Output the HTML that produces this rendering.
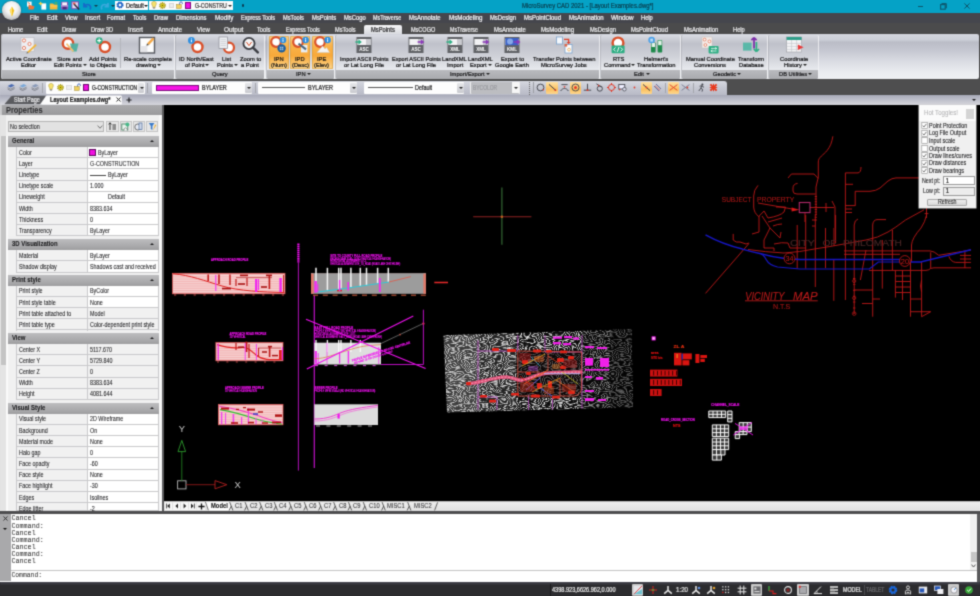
<!DOCTYPE html>
<html lang="en"><head><meta charset="utf-8"><title>MicroSurvey CAD 2021 - [Layout Examples.dwg*]</title>
<style>
html,body{margin:0;padding:0;background:#000;}
body{width:980px;height:596px;position:relative;overflow:hidden;font-family:"Liberation Sans",sans-serif;}
.b{position:absolute;display:block;}
.t{position:absolute;display:block;white-space:nowrap;transform-origin:0 50%;font-family:"Liberation Sans",sans-serif;-webkit-text-stroke:0.22px currentColor;}
.ns .t{-webkit-text-stroke:0.08px currentColor;}
.m{font-family:"Liberation Mono",monospace;-webkit-text-stroke:0;}
.tri{width:0;height:0;border-style:solid;border-width:2.5px 2px 0 2px;border-color:transparent;}
#w{position:absolute;left:-3px;top:-3px;width:986px;height:602px;filter:url(#soft);}
#c{position:absolute;left:3px;top:3px;width:980px;height:596px;}
</style></head>
<body>
<svg width="0" height="0" style="position:absolute"><defs><filter id="soft" x="0" y="0" width="100%" height="100%" color-interpolation-filters="sRGB"><feConvolveMatrix order="3" kernelMatrix="1 4 1 4 16 4 1 4 1" divisor="36" edgeMode="duplicate" preserveAlpha="true"/></filter></defs></svg>
<div class="b" style="left:0.00px;top:0.00px;width:980.03px;height:596.03px;background:#4b4b4c;"></div>
<div class="b" style="left:0.00px;top:0.00px;width:980.03px;height:12.63px;background:#05a2c6;"></div>
<div class="b" style="left:0.00px;top:12.60px;width:980.03px;height:10.83px;background:#45464d;"></div>
<div class="b" style="left:0.00px;top:23.40px;width:980.03px;height:10.13px;background:#4b4b4c;"></div>
<div class="b" style="left:0.00px;top:33.50px;width:980.03px;height:45.13px;background:#4b4b4c;"></div>
<div class="b" style="left:0.00px;top:78.60px;width:980.03px;height:16.63px;background:#4e4e4f;"></div>
<div class="b" style="left:0.00px;top:80.60px;width:727.03px;height:14.63px;background:#c8cad4;"></div>
<div class="b" style="left:0.00px;top:95.20px;width:980.03px;height:9.43px;background:#bcbeca;"></div>
<div class="b" style="left:0.00px;top:104.60px;width:162.43px;height:406.43px;background:#e0e0e0;"></div>
<div class="b" style="left:164.20px;top:104.60px;width:815.83px;height:396.73px;background:#000;"></div>
<div class="b" style="left:164.20px;top:501.30px;width:815.83px;height:9.73px;background:#e8e8e8;"></div>
<div class="b" style="left:0.00px;top:511.00px;width:980.03px;height:3.03px;background:#4e4e50;"></div>
<div class="b" style="left:0.00px;top:514.00px;width:980.03px;height:67.83px;background:#fff;"></div>
<div class="b" style="left:0.00px;top:514.00px;width:10.63px;height:67.43px;background:#a9a9ab;"></div>
<div class="b" style="left:977.40px;top:514.00px;width:2.63px;height:67.83px;background:#5a5a5c;"></div>
<div class="b" style="left:0.00px;top:581.80px;width:980.03px;height:14.23px;background:#2c2c2f;"></div>
<div id="w"><div id="c">
<div class="b" style="left:-3.00px;top:-3.00px;width:986.03px;height:602.03px;background:#4b4b4c;"></div>
<div class="b" style="left:-3.00px;top:-3.00px;width:986.03px;height:15.63px;background:#05a2c6;"></div>
<div class="b" style="left:-3.00px;top:12.60px;width:986.03px;height:10.83px;background:#45464d;"></div>
<div class="b" style="left:-3.00px;top:23.40px;width:986.03px;height:10.13px;background:#4b4b4c;"></div>
<div class="b" style="left:-3.00px;top:33.50px;width:986.03px;height:45.13px;background:#4b4b4c;"></div>
<div class="b" style="left:-3.00px;top:78.60px;width:986.03px;height:16.63px;background:#4e4e4f;"></div>
<div class="b" style="left:-3.00px;top:80.60px;width:730.03px;height:14.63px;background:#c8cad4;"></div>
<div class="b" style="left:-3.00px;top:95.20px;width:986.03px;height:9.43px;background:#bcbeca;"></div>
<div class="b" style="left:-3.00px;top:104.60px;width:165.43px;height:406.43px;background:#e0e0e0;"></div>
<div class="b" style="left:164.20px;top:104.60px;width:818.83px;height:396.73px;background:#000;"></div>
<div class="b" style="left:164.20px;top:501.30px;width:818.83px;height:9.73px;background:#e8e8e8;"></div>
<div class="b" style="left:-3.00px;top:511.00px;width:986.03px;height:3.03px;background:#4e4e50;"></div>
<div class="b" style="left:-3.00px;top:514.00px;width:986.03px;height:67.83px;background:#fff;"></div>
<div class="b" style="left:-3.00px;top:514.00px;width:13.63px;height:67.43px;background:#a9a9ab;"></div>
<div class="b" style="left:977.40px;top:514.00px;width:5.63px;height:67.83px;background:#5a5a5c;"></div>
<div class="b" style="left:-3.00px;top:581.80px;width:986.03px;height:17.23px;background:#2c2c2f;"></div>
<div class="b" style="left:0.00px;top:0.00px;width:980.03px;height:12.63px;background:#05a2c6;"></div>
<div class="b" style="left:0.00px;top:12.60px;width:980.03px;height:10.83px;background:#45464d;"></div>
<div class="b" style="left:0.00px;top:23.40px;width:980.03px;height:10.13px;background:#4b4b4c;"></div>
<div class="b" style="left:2.4px;top:1.4px;width:18.4px;height:18.4px;border-radius:50%;background:radial-gradient(circle at 50% 38%,#ffffff 0%,#f2f2f2 38%,#c4c4c4 72%,#858585 100%);box-shadow:0 0 1.5px #333;"></div>
<svg class="b" style="left:7.8px;top:5.6px" width="8" height="11" viewBox="0 0 8 11"><path d="M4 0.5 L6.2 4.5 L4.8 8.5 L4 10.5 L3.2 8.5 L1.8 4.5 Z" fill="#f0c020"/><path d="M4 0.5 L4 10.5 L3.2 8.5 L1.8 4.5Z" fill="#ffe070"/></svg>
<svg class="b" style="left:26.0px;top:1.2px" width="9" height="9" viewBox="0 0 9 9"><rect x="1" y="0.6" width="4.6" height="5" fill="#fbfbfb"/><path d="M2.6 3.4 L8.6 5.6 L7.4 8.4 L2.4 8.4Z" fill="#f0763c"/><path d="M1.6 1.2 L4 3" stroke="#d85a2a" stroke-width="0.8"/></svg>
<svg class="b" style="left:37.5px;top:1.2px" width="9" height="9" viewBox="0 0 9 9"><path d="M3.4 2.4 H8.2 V8.6 H3.4Z" fill="#fdfdfd"/><path d="M2.6 0.4 L3.4 1.8 L5 2.4 L3.4 3.2 L2.6 4.8 L1.8 3.2 L0.4 2.4 L1.8 1.8Z" fill="#f4d24a"/></svg>
<svg class="b" style="left:48.8px;top:1.2px" width="9" height="9" viewBox="0 0 9 9"><path d="M0.8 2.4 H4 L5 3.6 H8.4 V8.4 H0.8Z" fill="#f4b83a"/><path d="M5.6 0.8 H8.4 V3.4 H5.6Z" fill="#3fae7a"/><path d="M0.8 5 H8.4" stroke="#f8d470" stroke-width="0.8"/></svg>
<svg class="b" style="left:60.1px;top:1.2px" width="9" height="9" viewBox="0 0 9 9"><rect x="1" y="0.8" width="7.2" height="7.6" rx="0.6" fill="#8a5ab8"/><rect x="2.2" y="1.4" width="4.8" height="2.8" fill="#f8f4fc"/><rect x="2.6" y="5.6" width="4" height="2.8" fill="#4a2a78"/><rect x="1" y="4.6" width="7.2" height="0.7" fill="#e8d8f4"/></svg>
<svg class="b" style="left:71.0px;top:1.2px" width="9" height="9" viewBox="0 0 9 9"><rect x="0.8" y="0.8" width="6.6" height="7" fill="#e4dcf0" stroke="#7a4ab0" stroke-width="1"/><path d="M3 3 L8.2 8.4" stroke="#2a2a3a" stroke-width="1.5"/><rect x="2" y="1.6" width="2.4" height="1.6" fill="#e85a4a"/></svg>
<svg class="b" style="left:82.5px;top:1.5px" width="9" height="8" viewBox="0 0 9 8"><path d="M1 1 L1 4.6 L4.4 4.6 M1.2 4.4 C2.5 2 6.5 1.5 7.6 5 C7.8 6 7.4 6.8 6.8 7.2" fill="none" stroke="#1668c8" stroke-width="1.7"/></svg>
<svg class="b" style="left:99.5px;top:1.5px" width="9" height="8" viewBox="0 0 9 8"><path d="M8 1 L8 4.6 L4.6 4.6 M7.8 4.4 C6.5 2 2.5 1.5 1.4 5 C1.2 6 1.6 6.8 2.2 7.2" fill="none" stroke="#3aa8dc" stroke-width="1.7"/></svg>
<div class="b tri" style="left:93.5px;top:4.6px;border-top-color:#123a48"></div>
<div class="b tri" style="left:110.5px;top:4.6px;border-top-color:#123a48"></div>
<div class="b" style="left:115.40px;top:1.00px;width:32.63px;height:8.83px;background:#ffffff;"></div>
<svg class="b" style="left:116.3px;top:1.4px" width="8" height="8" viewBox="0 0 8 8"><circle cx="4" cy="4" r="2.6" fill="none" stroke="#1c62c4" stroke-width="1.9" stroke-dasharray="1.3 0.75"/><circle cx="4" cy="4" r="2.1" fill="none" stroke="#1c62c4" stroke-width="1.2"/></svg>
<span class="t " style="left:125.60px;top:1.76px;font-size:6.4px;line-height:7.68px;color:#222;transform:scaleX(0.8778);">Default</span>
<div class="b tri" style="left:144.4px;top:4.6px;border-top-color:#111"></div>
<div class="b" style="left:149.30px;top:1.00px;width:83.73px;height:8.83px;background:#fbfbfb;"></div>
<svg class="b" style="left:150.6px;top:1.3px" width="6" height="8" viewBox="0 0 6 8"><path d="M3 0.4 C0.2 0.4 0.2 3.6 1.8 5 V6.4 H4.2 V5 C5.8 3.6 5.8 0.4 3 0.4Z" fill="#f6e270" stroke="#a89428" stroke-width="0.5"/><rect x="1.9" y="6.3" width="2.2" height="1.3" fill="#8a8a8a"/></svg>
<svg class="b" style="left:159.3px;top:1.9px" width="7" height="7" viewBox="0 0 7 7"><circle cx="3.5" cy="3.5" r="2.6" fill="none" stroke="#a89a10" stroke-width="1.6" stroke-dasharray="1 0.63"/><circle cx="3.5" cy="3.5" r="2" fill="#f2e21c" stroke="#8a7e10" stroke-width="0.5"/><circle cx="3.5" cy="3.5" r="0.8" fill="#6a6210"/></svg>
<div class="b" style="left:168.80px;top:2.60px;width:5.63px;height:5.63px;background:#ececec;border:0.5px solid #d8d8d8;box-sizing:border-box;"></div>
<svg class="b" style="left:176.3px;top:1.4px" width="7" height="8" viewBox="0 0 7 8"><path d="M3.6 3.8 V2.2 C3.6 0.4 6.4 0.4 6.4 2.2 V3" fill="none" stroke="#3a62b8" stroke-width="0.9"/><rect x="0.6" y="3.6" width="4.6" height="3.8" fill="#f0d060" stroke="#a08828" stroke-width="0.5"/></svg>
<div class="b" style="left:185.30px;top:2.30px;width:6.03px;height:6.33px;background:#f010e0;border:0.6px solid #7a0a7a;box-sizing:border-box;"></div>
<span class="t " style="left:194.60px;top:1.76px;font-size:6.4px;line-height:7.68px;color:#333;transform:scaleX(0.8206);">G-CONSTRU</span>
<div class="b tri" style="left:227.8px;top:4.6px;border-top-color:#222"></div>
<div class="b" style="left:242.20px;top:3.60px;width:1.83px;height:3.03px;background:#0b3a52;border-radius:1px;"></div>
<span class="t " style="left:521.60px;top:1.64px;font-size:6.6px;line-height:7.92px;color:#0a4354;transform:scaleX(0.9036);">MicroSurvey CAD 2021 - [Layout Examples.dwg*]</span>
<div class="b" style="left:918.00px;top:5.50px;width:5.43px;height:1.03px;background:#0d566c;"></div>
<svg class="b" style="left:940.4px;top:2.6px" width="7" height="7" viewBox="0 0 7 7"><rect x="0.6" y="1.6" width="4.6" height="4.6" fill="none" stroke="#0d566c" stroke-width="1.1"/><path d="M1.8 1.2 V0.6 H6.3 V5 H5.6" fill="none" stroke="#0d566c" stroke-width="1"/></svg>
<svg class="b" style="left:964.2px;top:3px" width="6" height="6" viewBox="0 0 6 6"><path d="M0.4 0.4 L5.6 5.6 M5.6 0.4 L0.4 5.6" stroke="#0d566c" stroke-width="1"/></svg>
<span class="t " style="left:29.90px;top:13.92px;font-size:6.3px;line-height:7.56px;color:#f4f4f6;transform:scaleX(0.8865);">File</span>
<span class="t " style="left:46.60px;top:13.92px;font-size:6.3px;line-height:7.56px;color:#f4f4f6;transform:scaleX(0.9580);">Edit</span>
<span class="t " style="left:64.60px;top:13.92px;font-size:6.3px;line-height:7.56px;color:#f4f4f6;transform:scaleX(0.9304);">View</span>
<span class="t " style="left:84.70px;top:13.92px;font-size:6.3px;line-height:7.56px;color:#f4f4f6;transform:scaleX(0.9583);">Insert</span>
<span class="t " style="left:107.40px;top:13.92px;font-size:6.3px;line-height:7.56px;color:#f4f4f6;transform:scaleX(0.9071);">Format</span>
<span class="t " style="left:133.40px;top:13.92px;font-size:6.3px;line-height:7.56px;color:#f4f4f6;transform:scaleX(0.9111);">Tools</span>
<span class="t " style="left:154.40px;top:13.92px;font-size:6.3px;line-height:7.56px;color:#f4f4f6;transform:scaleX(0.9523);">Draw</span>
<span class="t " style="left:176.30px;top:13.92px;font-size:6.3px;line-height:7.56px;color:#f4f4f6;transform:scaleX(0.9206);">Dimensions</span>
<span class="t " style="left:214.50px;top:13.92px;font-size:6.3px;line-height:7.56px;color:#f4f4f6;transform:scaleX(0.9970);">Modify</span>
<span class="t " style="left:240.50px;top:13.92px;font-size:6.3px;line-height:7.56px;color:#f4f4f6;transform:scaleX(0.8721);">Express Tools</span>
<span class="t " style="left:283.00px;top:13.92px;font-size:6.3px;line-height:7.56px;color:#f4f4f6;transform:scaleX(0.9002);">MsTools</span>
<span class="t " style="left:311.80px;top:13.92px;font-size:6.3px;line-height:7.56px;color:#f4f4f6;transform:scaleX(0.9341);">MsPoints</span>
<span class="t " style="left:343.50px;top:13.92px;font-size:6.3px;line-height:7.56px;color:#f4f4f6;transform:scaleX(0.9293);">MsCogo</span>
<span class="t " style="left:372.80px;top:13.92px;font-size:6.3px;line-height:7.56px;color:#f4f4f6;transform:scaleX(0.8540);">MsTraverse</span>
<span class="t " style="left:409.40px;top:13.92px;font-size:6.3px;line-height:7.56px;color:#f4f4f6;transform:scaleX(0.9399);">MsAnnotate</span>
<span class="t " style="left:449.00px;top:13.92px;font-size:6.3px;line-height:7.56px;color:#f4f4f6;transform:scaleX(0.9863);">MsModeling</span>
<span class="t " style="left:490.00px;top:13.92px;font-size:6.3px;line-height:7.56px;color:#f4f4f6;transform:scaleX(0.9283);">MsDesign</span>
<span class="t " style="left:524.00px;top:13.92px;font-size:6.3px;line-height:7.56px;color:#f4f4f6;transform:scaleX(0.9434);">MsPointCloud</span>
<span class="t " style="left:568.60px;top:13.92px;font-size:6.3px;line-height:7.56px;color:#f4f4f6;transform:scaleX(0.9529);">MsAnimation</span>
<span class="t " style="left:610.80px;top:13.92px;font-size:6.3px;line-height:7.56px;color:#f4f4f6;transform:scaleX(1.0131);">Window</span>
<span class="t " style="left:641.20px;top:13.92px;font-size:6.3px;line-height:7.56px;color:#f4f4f6;transform:scaleX(0.9107);">Help</span>
<div class="b" style="left:364.4px;top:24.6px;width:37.8px;height:9.2px;background:linear-gradient(#f4f4f6,#d9dbe0);border-radius:2px 2px 0 0;"></div>
<span class="t " style="left:7.90px;top:25.96px;font-size:6.4px;line-height:7.68px;color:#ececee;transform:scaleX(0.8845);">Home</span>
<span class="t " style="left:37.40px;top:25.96px;font-size:6.4px;line-height:7.68px;color:#ececee;transform:scaleX(0.9430);">Edit</span>
<span class="t " style="left:61.70px;top:25.96px;font-size:6.4px;line-height:7.68px;color:#ececee;transform:scaleX(0.9441);">Draw</span>
<span class="t " style="left:90.60px;top:25.96px;font-size:6.4px;line-height:7.68px;color:#ececee;transform:scaleX(0.8877);">Draw 3D</span>
<span class="t " style="left:127.80px;top:25.96px;font-size:6.4px;line-height:7.68px;color:#ececee;transform:scaleX(0.9246);">Insert</span>
<span class="t " style="left:157.70px;top:25.96px;font-size:6.4px;line-height:7.68px;color:#ececee;transform:scaleX(0.9406);">Annotate</span>
<span class="t " style="left:196.90px;top:25.96px;font-size:6.4px;line-height:7.68px;color:#ececee;transform:scaleX(0.9377);">View</span>
<span class="t " style="left:223.70px;top:25.96px;font-size:6.4px;line-height:7.68px;color:#ececee;transform:scaleX(1.0046);">Output</span>
<span class="t " style="left:257.30px;top:25.96px;font-size:6.4px;line-height:7.68px;color:#ececee;transform:scaleX(0.8969);">Tools</span>
<span class="t " style="left:285.50px;top:25.96px;font-size:6.4px;line-height:7.68px;color:#ececee;transform:scaleX(0.8534);">Express Tools</span>
<span class="t " style="left:335.00px;top:25.96px;font-size:6.4px;line-height:7.68px;color:#ececee;transform:scaleX(0.8819);">MsTools</span>
<span class="t " style="left:371.20px;top:25.96px;font-size:6.4px;line-height:7.68px;color:#2a2a2c;transform:scaleX(0.9043);">MsPoints</span>
<span class="t " style="left:410.60px;top:25.96px;font-size:6.4px;line-height:7.68px;color:#ececee;transform:scaleX(0.8652);">MsCOGO</span>
<span class="t " style="left:450.30px;top:25.96px;font-size:6.4px;line-height:7.68px;color:#ececee;transform:scaleX(0.8317);">MsTraverse</span>
<span class="t " style="left:493.80px;top:25.96px;font-size:6.4px;line-height:7.68px;color:#ececee;transform:scaleX(0.9311);">MsAnnotate</span>
<span class="t " style="left:540.90px;top:25.96px;font-size:6.4px;line-height:7.68px;color:#ececee;transform:scaleX(0.9593);">MsModeling</span>
<span class="t " style="left:589.50px;top:25.96px;font-size:6.4px;line-height:7.68px;color:#ececee;transform:scaleX(0.9102);">MsDesign</span>
<span class="t " style="left:631.00px;top:25.96px;font-size:6.4px;line-height:7.68px;color:#ececee;transform:scaleX(0.9287);">MsPointCloud</span>
<span class="t " style="left:683.60px;top:25.96px;font-size:6.4px;line-height:7.68px;color:#ececee;transform:scaleX(0.9299);">MsAnimation</span>
<span class="t " style="left:733.00px;top:25.96px;font-size:6.4px;line-height:7.68px;color:#ececee;transform:scaleX(0.8965);">Help</span>
<div class="b" style="left:1.4px;top:33.5px;width:977.2px;height:45.1px;border-radius:2px;background:linear-gradient(#d4d6de 0%,#cccfd8 13%,#babcc6 18%,#c4c6d0 35%,#d9dbe2 60%,#eaecf0 85%,#eef0f3 100%);"></div>
<div class="b" style="left:2.4px;top:35px;width:171.9px;height:43.6px;border-radius:1.5px;background:linear-gradient(#d9dbe2 0%,#c6c8d0 14%,#bfc1ca 20%,#d0d2d9 50%,#e8eaee 80%);box-shadow:0.8px 0 0 #f4f4f6,-0.6px 0 0 #a9abb1;"></div>
<div class="b" style="left:2.4px;top:70.1px;width:171.9px;height:8.5px;border-radius:0 0 1.5px 1.5px;background:linear-gradient(#b9babe,#a9aaae);"></div>
<span class="t " style="left:81.71px;top:70.28px;font-size:6.2px;line-height:7.44px;color:#18181a;transform:scaleX(0.9300);">Store</span>
<div class="b" style="left:176.3px;top:35px;width:87.7px;height:43.6px;border-radius:1.5px;background:linear-gradient(#d9dbe2 0%,#c6c8d0 14%,#bfc1ca 20%,#d0d2d9 50%,#e8eaee 80%);box-shadow:0.8px 0 0 #f4f4f6,-0.6px 0 0 #a9abb1;"></div>
<div class="b" style="left:176.3px;top:70.1px;width:87.7px;height:8.5px;border-radius:0 0 1.5px 1.5px;background:linear-gradient(#b9babe,#a9aaae);"></div>
<span class="t " style="left:212.15px;top:70.28px;font-size:6.2px;line-height:7.44px;color:#18181a;transform:scaleX(0.9300);">Query</span>
<div class="b" style="left:266.5px;top:35px;width:67.5px;height:43.6px;border-radius:1.5px;background:linear-gradient(#d9dbe2 0%,#c6c8d0 14%,#bfc1ca 20%,#d0d2d9 50%,#e8eaee 80%);box-shadow:0.8px 0 0 #f4f4f6,-0.6px 0 0 #a9abb1;"></div>
<div class="b" style="left:266.5px;top:70.1px;width:67.5px;height:8.5px;border-radius:0 0 1.5px 1.5px;background:linear-gradient(#b9babe,#a9aaae);"></div>
<span class="t " style="left:296.39px;top:70.28px;font-size:6.2px;line-height:7.44px;color:#18181a;transform:scaleX(0.9300);">IPN</span>
<div class="b tri" style="left:307.4px;top:73px;border-top-color:#222"></div>
<div class="b" style="left:336.3px;top:35px;width:262.7px;height:43.6px;border-radius:1.5px;background:linear-gradient(#d9dbe2 0%,#c6c8d0 14%,#bfc1ca 20%,#d0d2d9 50%,#e8eaee 80%);box-shadow:0.8px 0 0 #f4f4f6,-0.6px 0 0 #a9abb1;"></div>
<div class="b" style="left:336.3px;top:70.1px;width:262.7px;height:8.5px;border-radius:0 0 1.5px 1.5px;background:linear-gradient(#b9babe,#a9aaae);"></div>
<span class="t " style="left:450.30px;top:70.28px;font-size:6.2px;line-height:7.44px;color:#18181a;transform:scaleX(0.9300);">Import/Export</span>
<div class="b tri" style="left:486.3px;top:73px;border-top-color:#222"></div>
<div class="b" style="left:601px;top:35px;width:79.3px;height:43.6px;border-radius:1.5px;background:linear-gradient(#d9dbe2 0%,#c6c8d0 14%,#bfc1ca 20%,#d0d2d9 50%,#e8eaee 80%);box-shadow:0.8px 0 0 #f4f4f6,-0.6px 0 0 #a9abb1;"></div>
<div class="b" style="left:601px;top:70.1px;width:79.3px;height:8.5px;border-radius:0 0 1.5px 1.5px;background:linear-gradient(#b9babe,#a9aaae);"></div>
<span class="t " style="left:634.33px;top:70.28px;font-size:6.2px;line-height:7.44px;color:#18181a;transform:scaleX(0.9300);">Edit</span>
<div class="b tri" style="left:645.7px;top:73px;border-top-color:#222"></div>
<div class="b" style="left:682.3px;top:35px;width:84.7px;height:43.6px;border-radius:1.5px;background:linear-gradient(#d9dbe2 0%,#c6c8d0 14%,#bfc1ca 20%,#d0d2d9 50%,#e8eaee 80%);box-shadow:0.8px 0 0 #f4f4f6,-0.6px 0 0 #a9abb1;"></div>
<div class="b" style="left:682.3px;top:70.1px;width:84.7px;height:8.5px;border-radius:0 0 1.5px 1.5px;background:linear-gradient(#b9babe,#a9aaae);"></div>
<span class="t " style="left:712.96px;top:70.28px;font-size:6.2px;line-height:7.44px;color:#18181a;transform:scaleX(0.9300);">Geodetic</span>
<div class="b tri" style="left:737.4px;top:73px;border-top-color:#222"></div>
<div class="b" style="left:769.2px;top:35px;width:49.0px;height:43.6px;border-radius:1.5px;background:linear-gradient(#d9dbe2 0%,#c6c8d0 14%,#bfc1ca 20%,#d0d2d9 50%,#e8eaee 80%);box-shadow:0.8px 0 0 #f4f4f6,-0.6px 0 0 #a9abb1;"></div>
<div class="b" style="left:769.2px;top:70.1px;width:49.0px;height:8.5px;border-radius:0 0 1.5px 1.5px;background:linear-gradient(#b9babe,#a9aaae);"></div>
<span class="t " style="left:778.50px;top:70.28px;font-size:6.2px;line-height:7.44px;color:#18181a;transform:scaleX(0.9300);">DB Utilities</span>
<div class="b tri" style="left:808.1px;top:73px;border-top-color:#222"></div>
<div class="b" style="left:268.7px;top:36px;width:20.2px;height:33.2px;border-radius:1.5px;background:linear-gradient(#fbd08a 0%,#f9b24a 30%,#f8a93a 60%,#fcd68e 100%);box-shadow:inset 0 0 0 0.6px #d59a3a;"></div>
<div class="b" style="left:290px;top:36px;width:20.2px;height:33.2px;border-radius:1.5px;background:linear-gradient(#fbd08a 0%,#f9b24a 30%,#f8a93a 60%,#fcd68e 100%);box-shadow:inset 0 0 0 0.6px #d59a3a;"></div>
<div class="b" style="left:311.5px;top:36px;width:21.1px;height:33.2px;border-radius:1.5px;background:linear-gradient(#fbd08a 0%,#f9b24a 30%,#f8a93a 60%,#fcd68e 100%);box-shadow:inset 0 0 0 0.6px #d59a3a;"></div>
<div class="b" style="left:120.30px;top:38.00px;width:0.63px;height:30.03px;background:#b4b6bc;"></div>
<span class="t " style="left:5.52px;top:55.08px;font-size:6.2px;line-height:7.44px;color:#101012;transform:scaleX(0.9350);">Active Coordinate</span>
<span class="t " style="left:20.87px;top:61.48px;font-size:6.2px;line-height:7.44px;color:#101012;transform:scaleX(0.9300);">Editor</span>
<svg class="b" style="left:18.9px;top:35.7px" width="19" height="19" viewBox="0 0 19 19"><rect x="2" y="1.5" width="13" height="14" fill="#eeeef2" stroke="#b8b8c0" stroke-width="0.6"/><circle cx="5" cy="4.5" r="1.6" fill="#fff" stroke="#e06848" stroke-width="0.8"/><circle cx="10.5" cy="8" r="1.6" fill="#fff" stroke="#e06848" stroke-width="0.8"/><circle cx="5" cy="12" r="1.6" fill="#fff" stroke="#e06848" stroke-width="0.8"/><path d="M8 16 L16.5 8 L17.6 9.4 L9.6 17 Z" fill="#f2b63a"/><path d="M8 16 L9.6 17 L7.4 17.6Z" fill="#555"/></svg>
<span class="t " style="left:57.43px;top:55.08px;font-size:6.2px;line-height:7.44px;color:#101012;transform:scaleX(0.9350);">Store and</span>
<span class="t " style="left:54.22px;top:61.48px;font-size:6.2px;line-height:7.44px;color:#101012;transform:scaleX(0.9300);">Edit Points</span>
<div class="b tri" style="left:82.8px;top:64.3px;border-top-color:#222"></div>
<svg class="b" style="left:60.5px;top:35.7px" width="19" height="19" viewBox="0 0 19 19"><circle cx="7" cy="7.5" r="5.2" fill="#fff" stroke="#d9502a" stroke-width="2.4"/><path d="M9 7.5 H17.5 L15.6 15.4 H11 Z" fill="#4fb0a0" opacity="0.95"/><path d="M6 7 L13 14.8 L11.8 16 L5 8.4Z" fill="#f4c070"/></svg>
<span class="t " style="left:89.18px;top:55.08px;font-size:6.2px;line-height:7.44px;color:#101012;transform:scaleX(0.9350);">Add Points</span>
<span class="t " style="left:90.22px;top:61.48px;font-size:6.2px;line-height:7.44px;color:#101012;transform:scaleX(0.9300);">to Objects</span>
<svg class="b" style="left:93.7px;top:35.7px" width="19" height="19" viewBox="0 0 19 19"><circle cx="11" cy="11" r="5" fill="#fff" stroke="#d9502a" stroke-width="2.4"/><circle cx="5.2" cy="4.6" r="3.4" fill="#2fae84"/><path d="M5.2 2.6 V6.6 M3.2 4.6 H7.2" stroke="#fff" stroke-width="1.1"/></svg>
<span class="t " style="left:123.60px;top:55.08px;font-size:6.2px;line-height:7.44px;color:#101012;transform:scaleX(0.9350);">Re-scale complete</span>
<span class="t " style="left:135.50px;top:61.48px;font-size:6.2px;line-height:7.44px;color:#101012;transform:scaleX(0.9300);">drawing</span>
<div class="b tri" style="left:156.7px;top:64.3px;border-top-color:#222"></div>
<svg class="b" style="left:138.1px;top:35.7px" width="19" height="19" viewBox="0 0 19 19"><rect x="1.5" y="1.5" width="15" height="15.5" fill="#fdfdfd" stroke="#55585e" stroke-width="1.4"/><rect x="2.4" y="10" width="7" height="6.2" fill="#e4e4e8"/><path d="M9 7.5 L14.6 1.4 L16.6 3 L11 9 Z" fill="#f3a848"/><path d="M9 7.5 L11 9 L8.4 9.8Z" fill="#444"/></svg>
<span class="t " style="left:179.20px;top:55.08px;font-size:6.2px;line-height:7.44px;color:#101012;transform:scaleX(0.9350);">ID North/East</span>
<span class="t " style="left:184.82px;top:61.48px;font-size:6.2px;line-height:7.44px;color:#101012;transform:scaleX(0.9300);">of Point</span>
<div class="b tri" style="left:205.4px;top:64.3px;border-top-color:#222"></div>
<svg class="b" style="left:187.1px;top:35.7px" width="19" height="19" viewBox="0 0 19 19"><circle cx="10.5" cy="11" r="5" fill="#fff" stroke="#d9502a" stroke-width="2.4"/><circle cx="4.4" cy="4.4" r="3.4" fill="#2f8fe0"/><rect x="3.9000000000000004" y="3.8000000000000003" width="1" height="2.4" fill="#fff"/><rect x="3.9000000000000004" y="2.4000000000000004" width="1" height="0.9" fill="#fff"/></svg>
<span class="t " style="left:222.09px;top:55.08px;font-size:6.2px;line-height:7.44px;color:#101012;transform:scaleX(0.9350);">List</span>
<span class="t " style="left:216.59px;top:61.48px;font-size:6.2px;line-height:7.44px;color:#101012;transform:scaleX(0.9300);">Points</span>
<div class="b tri" style="left:233.6px;top:64.3px;border-top-color:#222"></div>
<svg class="b" style="left:217.1px;top:35.7px" width="19" height="19" viewBox="0 0 19 19"><circle cx="12" cy="11.6" r="5" fill="#fff" stroke="#d9502a" stroke-width="2.2"/><rect x="2" y="1" width="8.6" height="11.4" fill="#eef0f4" stroke="#8a8c94" stroke-width="0.7"/><path d="M3.6 3.6 H9 M3.6 5.6 H9 M3.6 7.6 H9 M3.6 9.6 H9" stroke="#c4c6cc" stroke-width="0.7"/></svg>
<span class="t " style="left:239.67px;top:55.08px;font-size:6.2px;line-height:7.44px;color:#101012;transform:scaleX(0.9350);">Zoom to</span>
<span class="t " style="left:241.32px;top:61.48px;font-size:6.2px;line-height:7.44px;color:#101012;transform:scaleX(0.9300);">a Point</span>
<svg class="b" style="left:240.8px;top:35.7px" width="19" height="19" viewBox="0 0 19 19"><circle cx="8" cy="7.5" r="5.6" fill="#f4f4f6" stroke="#3a3c42" stroke-width="1.8"/><path d="M12 11.6 L16.8 16.4" stroke="#3a3c42" stroke-width="2.4" stroke-linecap="round"/><path d="M5.4 6 L8 9.6 L10.6 6" fill="none" stroke="#d9502a" stroke-width="1"/></svg>
<span class="t " style="left:273.97px;top:55.08px;font-size:6.2px;line-height:7.44px;color:#101012;transform:scaleX(0.9350);">IPN</span>
<span class="t " style="left:270.79px;top:61.48px;font-size:6.2px;line-height:7.44px;color:#101012;transform:scaleX(0.9300);">(Num)</span>
<svg class="b" style="left:269.3px;top:35.7px" width="19" height="19" viewBox="0 0 19 19"><circle cx="7" cy="6" r="4.8" fill="#fff" stroke="#d9502a" stroke-width="2.2"/><circle cx="14" cy="4" r="3.3" fill="#2f8fe0"/><rect x="13.5" y="3.4" width="1" height="2.4" fill="#fff"/><rect x="13.5" y="2" width="1" height="0.9" fill="#fff"/><circle cx="12.6" cy="12.4" r="4.2" fill="#1b5c9c"/><path d="M10.6 10.6 H14.6 V14.2 H10.6Z M12.6 10.6 V14.2 M10.6 12.4 H14.6" fill="#cfe2f4" stroke="#1b5c9c" stroke-width="0.6"/></svg>
<span class="t " style="left:295.17px;top:55.08px;font-size:6.2px;line-height:7.44px;color:#101012;transform:scaleX(0.9350);">IPD</span>
<span class="t " style="left:291.51px;top:61.48px;font-size:6.2px;line-height:7.44px;color:#101012;transform:scaleX(0.9300);">(Desc)</span>
<svg class="b" style="left:290.5px;top:35.7px" width="19" height="19" viewBox="0 0 19 19"><circle cx="7" cy="6" r="4.8" fill="#fff" stroke="#d9502a" stroke-width="2.2"/><circle cx="14.6" cy="4" r="3.3" fill="#2f8fe0"/><rect x="14.1" y="3.4" width="1" height="2.4" fill="#fff"/><rect x="14.1" y="2" width="1" height="0.9" fill="#fff"/><rect x="10" y="9" width="6.4" height="7.4" fill="#e8eef4"/><path d="M8 6.8 L15.6 12.6 L14.4 14.2 L7 8.4Z" fill="#4a6478"/></svg>
<span class="t " style="left:317.33px;top:55.08px;font-size:6.2px;line-height:7.44px;color:#101012;transform:scaleX(0.9350);">IPE</span>
<span class="t " style="left:314.47px;top:61.48px;font-size:6.2px;line-height:7.44px;color:#101012;transform:scaleX(0.9300);">(Elev)</span>
<svg class="b" style="left:312.5px;top:35.7px" width="19" height="19" viewBox="0 0 19 19"><circle cx="7" cy="6" r="4.8" fill="#fff" stroke="#d9502a" stroke-width="2.2"/><circle cx="14.6" cy="4" r="3.3" fill="#2f8fe0"/><rect x="14.1" y="3.4" width="1" height="2.4" fill="#fff"/><rect x="14.1" y="2" width="1" height="0.9" fill="#fff"/><path d="M4 16.5 L9.6 10 L12 13 L13.6 11.4 L16.6 16.5Z" fill="#f4f4f4" stroke="#c8c8c8" stroke-width="0.4"/></svg>
<span class="t " style="left:339.66px;top:55.08px;font-size:6.2px;line-height:7.44px;color:#101012;transform:scaleX(0.9000);">Import ASCII Points</span>
<span class="t " style="left:343.97px;top:61.48px;font-size:6.2px;line-height:7.44px;color:#101012;transform:scaleX(0.9300);">or Lat Long File</span>
<svg class="b" style="left:355.0px;top:36.2px" width="18" height="18" viewBox="0 0 18 18"><rect x="1.5" y="1" width="15" height="16" fill="#606266"/><rect x="2.4" y="3" width="13.2" height="6" fill="#f2f2f4"/><rect x="11" y="3" width="4.6" height="6" fill="#c9cacf"/><path d="M0.4 5.2 H3.4 V3.2 L6.8 6 L3.4 8.8 V6.8 H0.4Z" fill="#2fae84"/><text x="9" y="14.9" font-family="Liberation Sans,sans-serif" font-size="4.6" font-weight="bold" fill="#fff" text-anchor="middle">ASC</text></svg>
<span class="t " style="left:391.80px;top:55.08px;font-size:6.2px;line-height:7.44px;color:#101012;transform:scaleX(0.9000);">Export ASCII Points</span>
<span class="t " style="left:396.27px;top:61.48px;font-size:6.2px;line-height:7.44px;color:#101012;transform:scaleX(0.9300);">or Lat Long File</span>
<svg class="b" style="left:407.3px;top:36.2px" width="18" height="18" viewBox="0 0 18 18"><rect x="1.5" y="1" width="15" height="16" fill="#606266"/><rect x="2.4" y="3" width="13.2" height="6" fill="#f2f2f4"/><rect x="11" y="3" width="4.6" height="6" fill="#c9cacf"/><path d="M10.6 5.2 H13.8 V3.2 L17.4 6 L13.8 8.8 V6.8 H10.6Z" fill="#8a3ab8"/><text x="9" y="14.9" font-family="Liberation Sans,sans-serif" font-size="4.6" font-weight="bold" fill="#fff" text-anchor="middle">ASC</text></svg>
<span class="t " style="left:442.29px;top:55.08px;font-size:6.2px;line-height:7.44px;color:#101012;transform:scaleX(0.9350);">LandXML</span>
<span class="t " style="left:446.53px;top:61.48px;font-size:6.2px;line-height:7.44px;color:#101012;transform:scaleX(0.9300);">Import</span>
<svg class="b" style="left:445.7px;top:36.2px" width="18" height="18" viewBox="0 0 18 18"><rect x="1.5" y="1" width="15" height="16" fill="#606266"/><rect x="2.4" y="3" width="13.2" height="6" fill="#f2f2f4"/><rect x="11" y="3" width="4.6" height="6" fill="#c9cacf"/><path d="M0.4 5.2 H3.4 V3.2 L6.8 6 L3.4 8.8 V6.8 H0.4Z" fill="#2fae84"/><text x="9" y="14.9" font-family="Liberation Sans,sans-serif" font-size="4.6" font-weight="bold" fill="#fff" text-anchor="middle">XML</text></svg>
<span class="t " style="left:468.19px;top:55.08px;font-size:6.2px;line-height:7.44px;color:#101012;transform:scaleX(0.9350);">LandXML</span>
<span class="t " style="left:470.27px;top:61.48px;font-size:6.2px;line-height:7.44px;color:#101012;transform:scaleX(0.9300);">Export</span>
<div class="b tri" style="left:487.9px;top:64.3px;border-top-color:#222"></div>
<svg class="b" style="left:471.6px;top:36.2px" width="18" height="18" viewBox="0 0 18 18"><rect x="1.5" y="1" width="15" height="16" fill="#606266"/><rect x="2.4" y="3" width="13.2" height="6" fill="#f2f2f4"/><rect x="11" y="3" width="4.6" height="6" fill="#c9cacf"/><path d="M10.6 5.2 H13.8 V3.2 L17.4 6 L13.8 8.8 V6.8 H10.6Z" fill="#8a3ab8"/><text x="9" y="14.9" font-family="Liberation Sans,sans-serif" font-size="4.6" font-weight="bold" fill="#fff" text-anchor="middle">XML</text></svg>
<span class="t " style="left:500.80px;top:55.08px;font-size:6.2px;line-height:7.44px;color:#101012;transform:scaleX(0.9350);">Export to</span>
<span class="t " style="left:495.41px;top:61.48px;font-size:6.2px;line-height:7.44px;color:#101012;transform:scaleX(0.9300);">Google Earth</span>
<svg class="b" style="left:503.4px;top:36.2px" width="18" height="18" viewBox="0 0 18 18"><rect x="1.5" y="1" width="15" height="16" fill="#606266"/><rect x="2.4" y="3" width="13.2" height="6" fill="#f2f2f4"/><rect x="11" y="3" width="4.6" height="6" fill="#c9cacf"/><rect x="2.4" y="2" width="13.2" height="7.2" fill="#3a62c8"/><circle cx="7" cy="5.6" r="3" fill="#86a8e8"/><path d="M10.6 5.2 H13.8 V3.2 L17.4 6 L13.8 8.8 V6.8 H10.6Z" fill="#8a3ab8"/><text x="9" y="14.9" font-family="Liberation Sans,sans-serif" font-size="4.6" font-weight="bold" fill="#fff" text-anchor="middle">KML</text></svg>
<span class="t " style="left:533.09px;top:55.08px;font-size:6.2px;line-height:7.44px;color:#101012;transform:scaleX(0.9350);">Transfer Points between</span>
<span class="t " style="left:541.49px;top:61.48px;font-size:6.2px;line-height:7.44px;color:#101012;transform:scaleX(0.9300);">MicroSurvey Jobs</span>
<svg class="b" style="left:554.9px;top:35.7px" width="19" height="19" viewBox="0 0 19 19"><rect x="1.4" y="1" width="6" height="7" fill="#f4f8fc" stroke="#7aa2cc" stroke-width="0.8"/><rect x="10" y="8.4" width="7" height="8.6" fill="#fdfdfd" stroke="#7aa2cc" stroke-width="0.8"/><path d="M9 3.4 H13.6 V6.6" fill="none" stroke="#e0402a" stroke-width="1.3"/><path d="M11.6 6 H15.6 L13.6 8.2Z" fill="#e0402a"/><rect x="9.6" y="8" width="2.6" height="2.6" fill="#e06848"/><circle cx="14" cy="13.6" r="1.4" fill="none" stroke="#e8a040" stroke-width="0.7"/></svg>
<span class="t " style="left:613.16px;top:55.08px;font-size:6.2px;line-height:7.44px;color:#101012;transform:scaleX(0.9350);">RTS</span>
<span class="t " style="left:603.60px;top:61.48px;font-size:6.2px;line-height:7.44px;color:#101012;transform:scaleX(0.9300);">Command</span>
<div class="b tri" style="left:631.2px;top:64.3px;border-top-color:#222"></div>
<svg class="b" style="left:609.4px;top:35.7px" width="19" height="19" viewBox="0 0 19 19"><circle cx="9" cy="7" r="5.4" fill="#fff" stroke="#d9502a" stroke-width="2.4"/><rect x="2.6" y="9.6" width="13" height="7.6" rx="1" fill="#2fae84"/><path d="M6.6 11.4 L4.6 13.4 L6.6 15.4 M11.6 11.4 L13.6 13.4 L11.6 15.4 M10 11 L8.4 15.8" fill="none" stroke="#fff" stroke-width="0.9"/></svg>
<span class="t " style="left:644.45px;top:55.08px;font-size:6.2px;line-height:7.44px;color:#101012;transform:scaleX(0.9350);">Helmert's</span>
<span class="t " style="left:637.32px;top:61.48px;font-size:6.2px;line-height:7.44px;color:#101012;transform:scaleX(0.9300);">Transformation</span>
<svg class="b" style="left:647.1px;top:35.7px" width="19" height="19" viewBox="0 0 19 19"><rect x="4" y="6.4" width="4.6" height="10.2" rx="0.8" fill="#1f8a4c"/><rect x="10.6" y="4" width="4.6" height="12.6" rx="0.8" fill="#1f8a4c"/><rect x="4.6" y="7" width="3.4" height="4" fill="#e4f2e8"/><rect x="11.2" y="4.6" width="3.4" height="4.6" fill="#e4f2e8"/><circle cx="4.6" cy="4" r="3.3" fill="#4aa0e8"/><path d="M3.2 3.4 H6 M3.2 4.8 H6 M4 2.4 V5.8 M5.2 2.4 V5.8" stroke="#fff" stroke-width="0.5"/></svg>
<span class="t " style="left:685.91px;top:55.08px;font-size:6.2px;line-height:7.44px;color:#101012;transform:scaleX(0.9350);">Manual Coordinate</span>
<span class="t " style="left:694.38px;top:61.48px;font-size:6.2px;line-height:7.44px;color:#101012;transform:scaleX(0.9300);">Conversions</span>
<svg class="b" style="left:700.9px;top:35.7px" width="19" height="19" viewBox="0 0 19 19"><rect x="1" y="1" width="10" height="11" fill="#f4ece8" stroke="#c8c0bc" stroke-width="0.5"/><circle cx="3.6" cy="3.6" r="1.4" fill="#fff" stroke="#e06848" stroke-width="0.7"/><circle cx="8.4" cy="5.4" r="1.4" fill="#fff" stroke="#e06848" stroke-width="0.7"/><circle cx="4.4" cy="9" r="1.4" fill="#fff" stroke="#e06848" stroke-width="0.7"/><rect x="7.6" y="10" width="10" height="7.4" rx="0.8" fill="#2fae84"/><path d="M10 12.4 H15.6 M10 15 H15.6 M14.2 11.4 L15.8 12.4 L14.2 13.4 M11.4 14 L9.8 15 L11.4 16" fill="none" stroke="#fff" stroke-width="0.7"/></svg>
<span class="t " style="left:737.90px;top:55.08px;font-size:6.2px;line-height:7.44px;color:#101012;transform:scaleX(0.9350);">Transform</span>
<span class="t " style="left:738.66px;top:61.48px;font-size:6.2px;line-height:7.44px;color:#101012;transform:scaleX(0.9300);">Database</span>
<svg class="b" style="left:741.5px;top:35.7px" width="19" height="19" viewBox="0 0 19 19"><rect x="1" y="6.6" width="8.6" height="8" fill="#5ab8a8"/><path d="M12 16 V5 M12 5 L9.4 7.6 M12 5 L14.6 7.6" transform="translate(0,-3.4)" fill="none" stroke="#7a2aa8" stroke-width="1.7"/><path d="M14.4 6 V15.6 M14.4 15.6 L11.8 13 M14.4 15.6 L17 13" fill="none" stroke="#2fae84" stroke-width="1.7"/></svg>
<span class="t " style="left:780.42px;top:55.08px;font-size:6.2px;line-height:7.44px;color:#101012;transform:scaleX(0.9350);">Coordinate</span>
<span class="t " style="left:783.63px;top:61.48px;font-size:6.2px;line-height:7.44px;color:#101012;transform:scaleX(0.9300);">History</span>
<div class="b tri" style="left:802.6px;top:64.3px;border-top-color:#222"></div>
<svg class="b" style="left:785.1px;top:35.7px" width="19" height="19" viewBox="0 0 19 19"><rect x="1.6" y="1" width="15" height="15" fill="#f4f4f6" stroke="#9a9ca2" stroke-width="0.6"/><rect x="1.6" y="1" width="15" height="3" fill="#2f9e8a"/><path d="M1.6 7.4 H16.6 M1.6 10.4 H16.6 M1.6 13.4 H16.6 M6.6 4 V16 M11.6 4 V16" stroke="#c0c2c8" stroke-width="0.6"/><path d="M12.8 8.4 L18.6 11.2 L12.8 14Z" fill="#e83838"/></svg>
<div class="b" style="left:0.00px;top:78.60px;width:980.03px;height:16.63px;background:#4e4e4f;"></div>
<div class="b" style="left:0;top:80.6px;width:727px;height:14.6px;border-radius:0 3px 0 0;background:linear-gradient(#d6d8e0 0%,#c8cad4 40%,#b8bac6 100%);"></div>
<svg class="b" style="left:7.199999999999999px;top:83px" width="8" height="8" viewBox="0 0 8 8"><path d="M0.6 3 L4.6 1 L7.6 2.6 L3.6 4.6Z" fill="#4a6ab0"/><path d="M0.6 4.6 L3.6 6.2 L7.6 4.2 M0.6 6 L3.6 7.6 L7.6 5.6" fill="none" stroke="#6a6e78" stroke-width="0.7"/></svg>
<svg class="b" style="left:19px;top:83px" width="8" height="8" viewBox="0 0 8 8"><path d="M0.6 3 L4.6 1 L7.6 2.6 L3.6 4.6Z" fill="#7aa8d8"/><path d="M0.6 4.6 L3.6 6.2 L7.6 4.2 M0.6 6 L3.6 7.6 L7.6 5.6" fill="none" stroke="#6a6e78" stroke-width="0.7"/></svg>
<svg class="b" style="left:31.200000000000003px;top:83px" width="8" height="8" viewBox="0 0 8 8"><path d="M0.6 3 L4.6 1 L7.6 2.6 L3.6 4.6Z" fill="#8a9ab8"/><path d="M0.6 4.6 L3.6 6.2 L7.6 4.2 M0.6 6 L3.6 7.6 L7.6 5.6" fill="none" stroke="#6a6e78" stroke-width="0.7"/></svg>
<div class="b" style="left:42.00px;top:83.00px;width:1.03px;height:9.63px;background:#a4a6ac;"></div>
<div class="b" style="left:46.10px;top:82.20px;width:98.53px;height:11.43px;background:#fdfdfd;border-radius:1px;"></div>
<div class="b" style="left:137.80px;top:82.60px;width:6.43px;height:10.63px;background:linear-gradient(#e6e7ea,#c9cacf);border-radius:1px;"></div>
<div class="b tri" style="left:139.5px;top:87.2px;border-top-color:#222"></div>
<svg class="b" style="left:48.2px;top:83.4px" width="6" height="8" viewBox="0 0 6 8"><path d="M3 0.4 C0.2 0.4 0.2 3.6 1.8 5 V6.4 H4.2 V5 C5.8 3.6 5.8 0.4 3 0.4Z" fill="#f6e270" stroke="#a89428" stroke-width="0.5"/><rect x="1.9" y="6.3" width="2.2" height="1.3" fill="#8a8a8a"/></svg>
<svg class="b" style="left:56.5px;top:84.1px" width="7" height="7" viewBox="0 0 7 7"><circle cx="3.5" cy="3.5" r="2.6" fill="none" stroke="#a89a10" stroke-width="1.6" stroke-dasharray="1 0.63"/><circle cx="3.5" cy="3.5" r="2" fill="#f2e21c" stroke="#8a7e10" stroke-width="0.5"/><circle cx="3.5" cy="3.5" r="0.8" fill="#6a6210"/></svg>
<div class="b" style="left:66.20px;top:84.80px;width:5.43px;height:5.63px;background:#eeeeee;border:0.5px solid #dcdcdc;box-sizing:border-box;"></div>
<svg class="b" style="left:73.9px;top:83.4px" width="7" height="8" viewBox="0 0 7 8"><path d="M3.6 3.8 V2.2 C3.6 0.4 6.4 0.4 6.4 2.2 V3" fill="none" stroke="#3a62b8" stroke-width="0.9"/><rect x="0.6" y="3.6" width="4.6" height="3.8" fill="#f0d060" stroke="#a08828" stroke-width="0.5"/></svg>
<div class="b" style="left:82.90px;top:84.40px;width:6.13px;height:6.23px;background:#f010e0;border:0.6px solid #6a0a6a;box-sizing:border-box;"></div>
<span class="t " style="left:92.30px;top:84.12px;font-size:6.3px;line-height:7.56px;color:#1c1c1e;transform:scaleX(0.7810);">G-CONSTRUCTION</span>
<div class="b" style="left:147.00px;top:83.00px;width:1.03px;height:9.63px;background:#a4a6ac;"></div>
<div class="b" style="left:151.80px;top:82.20px;width:100.23px;height:11.43px;background:#fdfdfd;border-radius:1px;"></div>
<div class="b" style="left:245.20px;top:82.60px;width:6.43px;height:10.63px;background:linear-gradient(#e6e7ea,#c9cacf);border-radius:1px;"></div>
<div class="b tri" style="left:246.9px;top:87.2px;border-top-color:#222"></div>
<div class="b" style="left:155.60px;top:85.30px;width:43.83px;height:5.93px;background:#f414e4;border:0.5px solid #7a0a7a;box-sizing:border-box;"></div>
<span class="t " style="left:202.00px;top:84.12px;font-size:6.3px;line-height:7.56px;color:#1c1c1e;transform:scaleX(0.8672);">BYLAYER</span>
<div class="b" style="left:255.00px;top:83.00px;width:1.03px;height:9.63px;background:#a4a6ac;"></div>
<div class="b" style="left:258.00px;top:82.20px;width:99.23px;height:11.43px;background:#fdfdfd;border-radius:1px;"></div>
<div class="b" style="left:350.40px;top:82.60px;width:6.43px;height:10.63px;background:linear-gradient(#e6e7ea,#c9cacf);border-radius:1px;"></div>
<div class="b tri" style="left:352.1px;top:87.2px;border-top-color:#222"></div>
<div class="b" style="left:262.00px;top:87.00px;width:43.03px;height:1.03px;background:#555;"></div>
<span class="t " style="left:308.00px;top:84.12px;font-size:6.3px;line-height:7.56px;color:#1c1c1e;transform:scaleX(0.8742);">BYLAYER</span>
<div class="b" style="left:364.40px;top:82.20px;width:99.63px;height:11.43px;background:#fdfdfd;border-radius:1px;"></div>
<div class="b" style="left:457.20px;top:82.60px;width:6.43px;height:10.63px;background:linear-gradient(#e6e7ea,#c9cacf);border-radius:1px;"></div>
<div class="b tri" style="left:458.9px;top:87.2px;border-top-color:#222"></div>
<div class="b" style="left:367.80px;top:87.00px;width:44.93px;height:1.03px;background:#555;"></div>
<span class="t " style="left:414.80px;top:84.12px;font-size:6.3px;line-height:7.56px;color:#1c1c1e;transform:scaleX(0.8566);">Default</span>
<div class="b" style="left:470.40px;top:81.60px;width:49.63px;height:12.63px;background:#eeeeee;border-radius:1px;"></div>
<div class="b" style="left:471.00px;top:82.20px;width:48.43px;height:11.43px;background:#bcbdc1;border-radius:1px;"></div>
<div class="b" style="left:512.60px;top:82.60px;width:6.43px;height:10.63px;background:linear-gradient(#e6e7ea,#c9cacf);border-radius:1px;"></div>
<div class="b tri" style="left:514.3px;top:87.2px;border-top-color:#222"></div>
<div class="b" style="left:512.40px;top:82.40px;width:6.63px;height:11.03px;background:#f6f6f6;"></div>
<div class="b tri" style="left:514.2px;top:87.2px;border-top-color:#222"></div>
<span class="t " style="left:473.40px;top:84.12px;font-size:6.3px;line-height:7.56px;color:#9a9ba0;transform:scaleX(0.7855);">BYCOLOR</span>
<div class="b" style="left:529.00px;top:81.60px;width:1.03px;height:13.03px;background:repeating-linear-gradient(#666 0 1px,transparent 1px 2px);"></div>
<div class="b" style="left:533.20px;top:82.40px;width:0.63px;height:11.03px;background:#9c9ea4;"></div>
<svg class="b" style="left:536.2px;top:83.2px" width="9" height="9" viewBox="0 0 9 9"><circle cx="4.5" cy="4.5" r="3.4" fill="none" stroke="#3c3e46" stroke-width="0.9"/><circle cx="7.4" cy="6.8" r="0.8" fill="#e03a2a"/></svg>
<div class="b" style="left:546.4px;top:82px;width:11.2px;height:11.6px;border-radius:1px;background:linear-gradient(#fde2a6,#fbc05e 60%,#fdd68e);"></div>
<svg class="b" style="left:547.5px;top:83.2px" width="9" height="9" viewBox="0 0 9 9"><path d="M1 1.4 L8 7.6" stroke="#3c3e46" stroke-width="1"/><circle cx="7.4" cy="7.2" r="0.9" fill="#e03a2a"/></svg>
<svg class="b" style="left:559.5px;top:83.2px" width="9" height="9" viewBox="0 0 9 9"><path d="M0.6 8 C2.6 4.6 6.4 4.6 8.4 8 M1.4 1.6 H7.6" fill="none" stroke="#3c3e46" stroke-width="0.9"/><path d="M3.4 3.2 L4.5 5 L5.6 3.2Z" fill="#e03a2a"/></svg>
<div class="b" style="left:570.0px;top:82px;width:11.2px;height:11.6px;border-radius:1px;background:linear-gradient(#fde2a6,#fbc05e 60%,#fdd68e);"></div>
<svg class="b" style="left:571.1px;top:83.2px" width="9" height="9" viewBox="0 0 9 9"><circle cx="4.5" cy="4.5" r="3.5" fill="none" stroke="#3c3e46" stroke-width="0.9"/><circle cx="4.5" cy="4.5" r="1.5" fill="#e03a2a"/></svg>
<svg class="b" style="left:582.9px;top:83.2px" width="9" height="9" viewBox="0 0 9 9"><path d="M4.5 0.8 V7 M0.8 7.2 H8.2" fill="none" stroke="#3c3e46" stroke-width="0.9"/><rect x="3.6" y="6.4" width="1.8" height="1.6" fill="#e03a2a"/></svg>
<svg class="b" style="left:595.0px;top:83.2px" width="9" height="9" viewBox="0 0 9 9"><circle cx="4.8" cy="5.6" r="2.6" fill="none" stroke="#3c3e46" stroke-width="0.9"/><path d="M1.4 0.8 L6.4 4" stroke="#3c3e46" stroke-width="0.9"/><circle cx="3.6" cy="2.6" r="0.8" fill="#e03a2a"/></svg>
<svg class="b" style="left:606.5px;top:83.2px" width="9" height="9" viewBox="0 0 9 9"><circle cx="4.5" cy="4.5" r="3" fill="none" stroke="#e03a2a" stroke-width="1"/><path d="M4.5 0 V2 M4.5 7 V9 M0 4.5 H2 M7 4.5 H9" stroke="#e03a2a" stroke-width="1"/></svg>
<svg class="b" style="left:618.1px;top:83.2px" width="9" height="9" viewBox="0 0 9 9"><rect x="0.8" y="1.4" width="6" height="4.6" fill="#eef" stroke="#3c3e46" stroke-width="0.8"/><circle cx="6.4" cy="6.2" r="1.8" fill="#dde" stroke="#3c3e46" stroke-width="0.7"/><circle cx="1.6" cy="6.6" r="0.8" fill="#e03a2a"/></svg>
<svg class="b" style="left:629.5px;top:83.2px" width="9" height="9" viewBox="0 0 9 9"><circle cx="4.5" cy="4.5" r="0.9" fill="#e03a2a"/></svg>
<div class="b" style="left:640.8px;top:82px;width:11.2px;height:11.6px;border-radius:1px;background:linear-gradient(#fde2a6,#fbc05e 60%,#fdd68e);"></div>
<svg class="b" style="left:641.9px;top:83.2px" width="9" height="9" viewBox="0 0 9 9"><path d="M1 1.4 L8 7.6" stroke="#3c3e46" stroke-width="1"/><circle cx="4.5" cy="4.5" r="0.9" fill="#e03a2a"/></svg>
<svg class="b" style="left:653.1px;top:83.2px" width="9" height="9" viewBox="0 0 9 9"><path d="M1 3 L6 8 M3 1 L8 6" stroke="#6a6e98" stroke-width="1"/><path d="M2 2.6 L7 7.4" stroke="#e03a2a" stroke-width="0.6"/></svg>
<div class="b" style="left:668.0px;top:82px;width:11.2px;height:11.6px;border-radius:1px;background:linear-gradient(#fde2a6,#fbc05e 60%,#fdd68e);"></div>
<svg class="b" style="left:669.1px;top:83.2px" width="9" height="9" viewBox="0 0 9 9"><path d="M0.6 1.6 L8.4 7.4 M0.6 7.4 L8.4 1.6" stroke="#e03a2a" stroke-width="0.9"/></svg>
<svg class="b" style="left:680.8px;top:83.2px" width="9" height="9" viewBox="0 0 9 9"><path d="M0.6 1.6 L8.4 7.4 M0.6 7.4 L8.4 1.6" stroke="#6a6e88" stroke-width="0.8"/><circle cx="6.4" cy="4.5" r="0.9" fill="#e03a2a"/></svg>
<svg class="b" style="left:696.7px;top:83.2px" width="9" height="9" viewBox="0 0 9 9"><circle cx="5.4" cy="1.4" r="1" fill="#3c3e46"/><path d="M5 2.6 L3.8 5.2 L5.6 6.4 L5 8.6 M3.8 5.2 L1.8 8 M2.6 3.2 L4.8 2.8 L7 4.4" fill="none" stroke="#3c3e46" stroke-width="0.9"/></svg>
<svg class="b" style="left:708.5px;top:83.2px" width="9" height="9" viewBox="0 0 9 9"><path d="M1.4 1.4 L7.6 7.6 M7.6 1.4 L1.4 7.6" stroke="#e8381c" stroke-width="2"/><path d="M4.5 0.8 V8.2 M0.8 4.5 H8.2" stroke="#e8381c" stroke-width="1"/></svg>
<div class="b" style="left:665.40px;top:83.00px;width:0.63px;height:9.63px;background:#a4a6ac;"></div>
<div class="b" style="left:693.00px;top:83.00px;width:1.03px;height:9.63px;background:#a4a6ac;"></div>
<div class="b" style="left:0;top:95.2px;width:980px;height:9.4px;background:linear-gradient(#a8aab8,#babcc8 40%,#d6d6dc);"></div>
<svg class="b" style="left:0;top:95px" width="140" height="10" viewBox="0 0 140 10"><path d="M4.4 9.2 L11 1.6 Q11.8 0.8 13 0.8 H46 L42 9.2Z" fill="#5a5b5f"/><path d="M40 9.6 L45.6 1.4 Q46.2 0.6 47.4 0.6 H120.6 Q121.8 0.6 121.8 1.8 V9.6Z" fill="#fcfcfc"/></svg>
<span class="t " style="left:13.80px;top:96.22px;font-size:6.3px;line-height:7.56px;color:#e8e8ea;transform:scaleX(0.8700);">Start Page</span>
<span class="t " style="left:50.40px;top:96.00px;font-size:6.5px;line-height:7.80px;color:#1c1c1e;transform:scaleX(0.8517);font-weight:bold;">Layout Examples.dwg*</span>
<svg class="b" style="left:115.6px;top:97.2px" width="5" height="5" viewBox="0 0 5 5"><path d="M0.5 0.5 L4.5 4.5 M4.5 0.5 L0.5 4.5" stroke="#222" stroke-width="1"/></svg>
<svg class="b" style="left:125.8px;top:97px" width="6" height="6" viewBox="0 0 6 6"><path d="M3 0.4 V5.6 M0.4 3 H5.6" stroke="#1c1c1e" stroke-width="1.2"/></svg>
<div class="b tri" style="left:971.6px;top:99px;border-width:2.6px 2.4px 0 2.4px;border-top-color:#1a1a1c"></div>
<div class="b" style="left:164.20px;top:104.60px;width:815.83px;height:396.73px;background:#000;"></div>
<svg class="b" style="left:0;top:0;opacity:0.999" width="980" height="596" viewBox="0 0 980 596">
<defs>
<filter id="ctr" x="0" y="0" width="100%" height="100%" color-interpolation-filters="sRGB">
<feTurbulence type="fractalNoise" baseFrequency="0.045 0.085" numOctaves="2" seed="7" result="n"/>
<feColorMatrix in="n" type="matrix" values="0 0 0 0 0  0 0 0 0 0  0 0 0 0 0  1 0 0 0 0" result="g"/>
<feComponentTransfer in="g"><feFuncA type="table" tableValues="0 0 1 0 0 1 0 0 1 0 0 1 0 0 1 0 0 1 0 0 1 0 0 1 0 0 1 0 0 1 0 0 1 0 0 1 0 0 1 0 0 1 0 0 1 0 0 1 0"/></feComponentTransfer>
<feComposite in="SourceGraphic" operator="in"/>

</filter>
<clipPath id="cv"><rect x="164.2" y="104.6" width="815.8" height="396.7"/></clipPath>
<clipPath id="mapc"><path d="M443.5 335.2 L631.5 329.2 L633 407.2 L447 412.6Z"/></clipPath>
</defs>
<g clip-path="url(#cv)">
<path d="M501.9 187.4 V244.8" stroke="#2f5f2f" stroke-width="1.3"/><path d="M473.2 216.8 H531.4" stroke="#8e2222" stroke-width="1.1"/><circle cx="501.9" cy="216.8" r="1.3" fill="#c06020"/>
<path d="M298.4 262.5 V470.6" stroke="#b010b8" stroke-width="1"/><path d="M298.4 243.4 V262.7" stroke="#f010f0" stroke-width="2.2" stroke-dasharray="1.6 0.5"/>
<path d="M314.3 295.4 V468" stroke="#c010c8" stroke-width="1.2"/>
<rect x="172.6" y="273.3" width="112.4" height="20.5" fill="#f6cfcf"/><path d="M172.6 274.5 H285" stroke="#ee9a9a" stroke-width="0.5"/><path d="M172.6 276.8 H285" stroke="#ee9a9a" stroke-width="0.5"/><path d="M172.6 279.1 H285" stroke="#ee9a9a" stroke-width="0.5"/><path d="M172.6 281.4 H285" stroke="#ee9a9a" stroke-width="0.5"/><path d="M172.6 283.7 H285" stroke="#ee9a9a" stroke-width="0.5"/><path d="M172.6 286.0 H285" stroke="#ee9a9a" stroke-width="0.5"/><path d="M172.6 288.3 H285" stroke="#ee9a9a" stroke-width="0.5"/><path d="M172.6 290.6 H285" stroke="#ee9a9a" stroke-width="0.5"/><path d="M172.6 292.9 H285" stroke="#ee9a9a" stroke-width="0.5"/><rect x="172.6" y="273.3" width="112.4" height="20.5" fill="none" stroke="#e85858" stroke-width="0.7"/>
<path d="M173 273.8 C190 275 205 281 222 286 S262 292 284.5 292.5" fill="none" stroke="#e02020" stroke-width="1"/>
<path d="M208.2 274.5 V281" stroke="#c01818" stroke-width="1.6"/>
<path d="M219 274.5 V284" stroke="#c01818" stroke-width="1.6"/>
<path d="M230 274.5 V285" stroke="#c01818" stroke-width="1.4"/>
<path d="M215.8 275 V291" stroke="#f040f0" stroke-width="1.2"/>
<path d="M236 279 V286" stroke="#c01818" stroke-width="1.2"/>
<path d="M247 278 V286" stroke="#c01818" stroke-width="1.2"/>
<path d="M256.2 279 V292" stroke="#f020f0" stroke-width="2.2"/>
<path d="M258.6 279 V290" stroke="#f020f0" stroke-width="1"/>
<path d="M269.4 276 V289" stroke="#c01818" stroke-width="1.6"/>
<path d="M280.6 278 V292" stroke="#f020f0" stroke-width="2.4"/>
<path d="M283.6 275 V292" stroke="#c01818" stroke-width="1"/>
<path d="M240 275.4 H248" stroke="#a81010" stroke-width="1.6"/>
<path d="M266 275.4 H272" stroke="#a81010" stroke-width="1.6"/>
<path d="M222 288.6 H231" stroke="#a81010" stroke-width="1.6"/>
<path d="M238 284 H245" stroke="#a81010" stroke-width="1.6"/>
<path d="M261 287 H267" stroke="#a81010" stroke-width="1.6"/>
<path d="M236 277.6 H272" stroke="#a81010" stroke-width="0.6"/>
<path d="M174 295 H284" stroke="#e05050" stroke-width="0.9" stroke-dasharray="2.2 7.6"/>
<rect x="215.9" y="342.6" width="67.1" height="18.2" fill="#f6cfcf"/><path d="M215.9 343.8 H283" stroke="#ee9a9a" stroke-width="0.5"/><path d="M215.9 346.1 H283" stroke="#ee9a9a" stroke-width="0.5"/><path d="M215.9 348.4 H283" stroke="#ee9a9a" stroke-width="0.5"/><path d="M215.9 350.7 H283" stroke="#ee9a9a" stroke-width="0.5"/><path d="M215.9 353.0 H283" stroke="#ee9a9a" stroke-width="0.5"/><path d="M215.9 355.3 H283" stroke="#ee9a9a" stroke-width="0.5"/><path d="M215.9 357.6 H283" stroke="#ee9a9a" stroke-width="0.5"/><path d="M215.9 359.9 H283" stroke="#ee9a9a" stroke-width="0.5"/><rect x="215.9" y="342.6" width="67.1" height="18.2" fill="none" stroke="#e85858" stroke-width="0.7"/>
<path d="M217 344.6 C225 347 232 348.6 240 347.6 S250 350 256 355 S270 360 282 359.4" fill="none" stroke="#e02020" stroke-width="1.2"/>
<path d="M218.2 343.5 V360" stroke="#f020f0" stroke-width="1.2"/>
<path d="M236 343 V350" stroke="#c01818" stroke-width="1.2"/>
<path d="M246.4 341.6 V352" stroke="#c01818" stroke-width="2"/>
<path d="M249 344 V358" stroke="#c01818" stroke-width="1.2"/>
<path d="M245.2 343 V360" stroke="#f040f0" stroke-width="1"/>
<path d="M256.4 344 V360" stroke="#f040f0" stroke-width="1"/>
<path d="M258.6 348 V356" stroke="#c01818" stroke-width="1"/>
<path d="M269.6 347 V357" stroke="#c01818" stroke-width="1.6"/>
<path d="M280.4 350 V359" stroke="#e02020" stroke-width="2.8"/>
<path d="M282.4 347 V360" stroke="#f020f0" stroke-width="1"/>
<path d="M238 347.2 H244" stroke="#a81010" stroke-width="1.5"/>
<path d="M262 352 H267" stroke="#a81010" stroke-width="1.5"/>
<path d="M268 346.6 H272" stroke="#a81010" stroke-width="1.5"/>
<path d="M272 355.6 H278" stroke="#a81010" stroke-width="1.5"/>
<path d="M258 348 H281" stroke="#a81010" stroke-width="0.6"/>
<path d="M217 362 H282" stroke="#e05050" stroke-width="0.8" stroke-dasharray="2 7.4"/>
<rect x="218.4" y="404.4" width="64.6" height="20.4" fill="#f6cfcf"/><path d="M218.4 405.6 H283" stroke="#ee9a9a" stroke-width="0.5"/><path d="M218.4 407.9 H283" stroke="#ee9a9a" stroke-width="0.5"/><path d="M218.4 410.2 H283" stroke="#ee9a9a" stroke-width="0.5"/><path d="M218.4 412.5 H283" stroke="#ee9a9a" stroke-width="0.5"/><path d="M218.4 414.8 H283" stroke="#ee9a9a" stroke-width="0.5"/><path d="M218.4 417.1 H283" stroke="#ee9a9a" stroke-width="0.5"/><path d="M218.4 419.4 H283" stroke="#ee9a9a" stroke-width="0.5"/><path d="M218.4 421.7 H283" stroke="#ee9a9a" stroke-width="0.5"/><path d="M218.4 424.0 H283" stroke="#ee9a9a" stroke-width="0.5"/><rect x="218.4" y="404.4" width="64.6" height="20.4" fill="none" stroke="#e85858" stroke-width="0.7"/>
<path d="M219.5 406.4 C232 408 244 411 256 415 S272 421 282.4 422.6" fill="none" stroke="#f040c0" stroke-width="1.1"/>
<path d="M220 409.6 C232 411.6 244 415 256 419 S272 423 282 424" fill="none" stroke="#30c030" stroke-width="1.1"/>
<path d="M221.6 412 V424.4" stroke="#f040f0" stroke-width="1.4"/>
<path d="M225.6 413 V424.4" stroke="#f040f0" stroke-width="1"/>
<path d="M233.4 414 V424.4" stroke="#f040f0" stroke-width="1.6"/>
<path d="M241.6 417 V424.4" stroke="#f040f0" stroke-width="1.2"/>
<path d="M248.4 408 V424.4" stroke="#f040f0" stroke-width="1.2"/>
<path d="M256 418 V424.4" stroke="#f040f0" stroke-width="1"/>
<path d="M262 419 V424.4" stroke="#f060f0" stroke-width="0.8"/>
<path d="M275.2 421 V424.4" stroke="#f060f0" stroke-width="0.8"/>
<path d="M221 408.6 H229" stroke="#b01010" stroke-width="2"/>
<path d="M236 409.4 H239" stroke="#b01010" stroke-width="1.2"/>
<path d="M243 407.6 H246" stroke="#b01010" stroke-width="1.2"/>
<path d="M247 409.6 H255" stroke="#b01010" stroke-width="2"/>
<path d="M258 412 H263" stroke="#b01010" stroke-width="1.4"/>
<path d="M275 415.6 H282" stroke="#b01010" stroke-width="2.4"/>
<path d="M231 423 H238" stroke="#b01010" stroke-width="1.6"/>
<path d="M248 422.6 H254" stroke="#b01010" stroke-width="1.6"/>
<path d="M262 423 H268" stroke="#b01010" stroke-width="1.4"/>
<path d="M272 422.4 H281" stroke="#b01010" stroke-width="1.8"/>
<path d="M253 414 H258" stroke="#4040c0" stroke-width="1.6"/>
<text x="0" y="0" transform="translate(211.0,261.39) scale(0.840,1)" font-family="Liberation Sans,sans-serif" font-size="3.3" font-weight="bold" fill="#f010f0" stroke="#f010f0" stroke-width="0.16">APPROACH ROAD PROFILE</text>
<text x="0" y="0" transform="translate(229.6,334.79) scale(0.825,1)" font-family="Liberation Sans,sans-serif" font-size="3.3" font-weight="bold" fill="#f010f0" stroke="#f010f0" stroke-width="0.16">APPROACH ROAD PROFILE</text>
<text x="0" y="0" transform="translate(229.6,337.94) scale(0.977,1)" font-family="Liberation Sans,sans-serif" font-size="2.6" font-weight="normal" fill="#f010f0" stroke="#f010f0" stroke-width="0.16">10' VERTICAL</text>
<text x="0" y="0" transform="translate(225.0,388.79) scale(0.828,1)" font-family="Liberation Sans,sans-serif" font-size="3.3" font-weight="bold" fill="#f010f0" stroke="#f010f0" stroke-width="0.16">APPROACH SEWER PROFILE</text>
<text x="0" y="0" transform="translate(225.0,392.14) scale(0.842,1)" font-family="Liberation Sans,sans-serif" font-size="2.6" font-weight="normal" fill="#f010f0" stroke="#f010f0" stroke-width="0.16">10' VERTICAL EXAGGERATION</text>
<rect x="311" y="273.3" width="114.9" height="20.5" fill="#9c9c9c"/>
<rect x="311" y="273.3" width="2.6" height="20.5" fill="#e07868"/><rect x="423.4" y="273.3" width="2.5" height="20.5" fill="#e07868"/>
<path d="M311 273.5 H425.9" stroke="#b0a0a0" stroke-width="0.5"/>
<path d="M316 267.8 V291.6" stroke="#f4f4f4" stroke-width="1.5"/>
<path d="M327.4 267.8 V290.4" stroke="#f4f4f4" stroke-width="1.5"/>
<path d="M338.7 267.8 V289" stroke="#f4f4f4" stroke-width="1.5"/>
<path d="M341 267.8 V288.6" stroke="#f4f4f4" stroke-width="1.5"/>
<path d="M350.9 267.8 V287.2" stroke="#f4f4f4" stroke-width="1.5"/>
<path d="M360.3 267.8 V286" stroke="#f4f4f4" stroke-width="1.5"/>
<path d="M366.5 267.8 V285.2" stroke="#f4f4f4" stroke-width="1.5"/>
<path d="M377.6 267.8 V283.6" stroke="#f4f4f4" stroke-width="1.5"/>
<path d="M388.3 267.8 V282" stroke="#f4f4f4" stroke-width="1.5"/>
<path d="M317.7 292 L340 289.2 L389 282" fill="none" stroke="#30c8d8" stroke-width="1"/><path d="M389 282 L410.8 276.6" stroke="#d86050" stroke-width="0.9"/><path d="M337 290.6 H342" stroke="#e02020" stroke-width="1.4"/>
<path d="M315.6 281 V292.6" stroke="#f030f0" stroke-width="2.6"/>
<path d="M317.8 284 V292" stroke="#f030f0" stroke-width="1"/>
<path d="M339.6 280 V291" stroke="#f030f0" stroke-width="1.4"/>
<path d="M348.2 282 V290.6" stroke="#f030f0" stroke-width="1.6"/>
<path d="M379.8 278 V292" stroke="#f030f0" stroke-width="1.8"/>
<path d="M313 295.2 H426" stroke="#d86040" stroke-width="1" stroke-dasharray="5 4.8"/>
<text x="0" y="0" transform="translate(330.3,256.82) scale(0.808,1)" font-family="Liberation Sans,sans-serif" font-size="3.4" font-weight="bold" fill="#f010f0" stroke="#f010f0" stroke-width="0.16">SITE TO COUNTY FULL ROAD PROFILE</text>
<text x="0" y="0" transform="translate(330.3,259.64) scale(0.862,1)" font-family="Liberation Sans,sans-serif" font-size="2.6" font-weight="normal" fill="#f010f0" stroke="#f010f0" stroke-width="0.16">PROFILE VIEW STA0+12 (NO VERTICAL EXAGGERATION)</text>
<text x="0" y="0" transform="translate(330.3,262.24) scale(0.949,1)" font-family="Liberation Sans,sans-serif" font-size="2.6" font-weight="normal" fill="#f010f0" stroke="#f010f0" stroke-width="0.16">HORIZONTAL ALIGNMENT = CL</text>
<text x="0" y="0" transform="translate(330.3,264.94) scale(0.844,1)" font-family="Liberation Sans,sans-serif" font-size="2.6" font-weight="normal" fill="#f010f0" stroke="#f010f0" stroke-width="0.16">VERTICAL ALIGNMENT SITE_TO_ROAD (ROAD LANE CENTERLINE)</text>
<path d="M434.3 282.5 H448" stroke="#e82a2a" stroke-width="1.5"/>
<rect x="314.3" y="342.7" width="66.7" height="21.8" fill="#dedede"/>
<path d="M316 340 V352" stroke="#fafafa" stroke-width="1.3"/>
<path d="M327.4 340 V352" stroke="#fafafa" stroke-width="1.3"/>
<path d="M338.7 340 V352" stroke="#fafafa" stroke-width="1.3"/>
<path d="M341 340 V352" stroke="#fafafa" stroke-width="1.3"/>
<path d="M350.9 340 V352" stroke="#fafafa" stroke-width="1.3"/>
<path d="M360.3 340 V352" stroke="#fafafa" stroke-width="1.3"/>
<path d="M315.8 351 V363.6" stroke="#f030f0" stroke-width="2.2"/>
<path d="M318.2 353 V363" stroke="#f030f0" stroke-width="0.9"/>
<path d="M327 343 V364" stroke="#f030f0" stroke-width="0.7"/>
<path d="M339.6 352 V363.6" stroke="#f030f0" stroke-width="1.2"/>
<path d="M348.4 351 V363.6" stroke="#f030f0" stroke-width="1.4"/>
<path d="M378.8 347 V364" stroke="#f030f0" stroke-width="0.8"/>
<path d="M314.5 358.6 C325 359 335 354 350 349.6 S370 345.4 381 344.6" fill="none" stroke="#d88050" stroke-width="0.8"/>
<path d="M315 365.6 H381" stroke="#f050f0" stroke-width="0.9" stroke-dasharray="3 6.6"/>
<path d="M306 319.2 L425.6 368.4 M306.8 369 L413.3 315.9" stroke="#f010f0" stroke-width="1.1"/>
<path d="M423.4 309.7 V364.5 H381" fill="none" stroke="#d010d8" stroke-width="0.9"/>
<path d="M381 343.5 L423.4 323.4" stroke="#8a8a8a" stroke-width="0.7"/><circle cx="423.4" cy="323.6" r="1.2" fill="#d02060"/><circle cx="400" cy="334.6" r="0.9" fill="#c05040"/>
<text x="0" y="0" transform="translate(314.6,329.02) scale(0.857,1)" font-family="Liberation Sans,sans-serif" font-size="3.4" font-weight="bold" fill="#f010f0" stroke="#f010f0" stroke-width="0.16">EAST FULL ROAD PROFILE</text>
<text x="0" y="0" transform="translate(314.6,332.44) scale(0.866,1)" font-family="Liberation Sans,sans-serif" font-size="2.6" font-weight="normal" fill="#f010f0" stroke="#f010f0" stroke-width="0.16">PROFILE VIEW STA0+12 (NO VERTICAL EXAGGERATION)</text>
<text x="0" y="0" transform="translate(314.6,335.14) scale(0.879,1)" font-family="Liberation Sans,sans-serif" font-size="2.6" font-weight="normal" fill="#f010f0" stroke="#f010f0" stroke-width="0.16">HORIZONTAL ALIGNMENT SITE_LOT1</text>
<text x="0" y="0" transform="translate(314.6,337.84) scale(0.849,1)" font-family="Liberation Sans,sans-serif" font-size="2.6" font-weight="normal" fill="#f010f0" stroke="#f010f0" stroke-width="0.16">VERTICAL ALIGNMENT EAST_ROAD (ROAD LANE CENTERLINE)</text>
<g transform="translate(352,360.6) rotate(-17.4)"><text x="0" y="0" transform="translate(0.0,1.15) scale(0.778,1)" font-family="Liberation Sans,sans-serif" font-size="3.2" font-weight="bold" fill="#f010f0" stroke="#f010f0" stroke-width="0.16">PROFILE SUPERSEDED BY REVISED CENTERLINE</text><text x="0" y="0" transform="translate(1.0,4.14) scale(0.766,1)" font-family="Liberation Sans,sans-serif" font-size="2.6" font-weight="normal" fill="#f010f0" stroke="#f010f0" stroke-width="0.16">SEE SHEET C6 FOR UPDATED ALIGNMENT</text></g>
<rect x="314.3" y="404.3" width="63.7" height="20.7" fill="#dcdcdc"/>
<path d="M314.5 419 C328 419 334 415.4 342 412.4 S362 407.4 377.8 405.4" fill="none" stroke="#f030d0" stroke-width="0.9"/><path d="M314.5 421 C328 421 335 417.4 343 414.2 S362 409.2 377.8 407" fill="none" stroke="#f070d8" stroke-width="0.8"/><path d="M338.6 414 V418.6" stroke="#f010f0" stroke-width="2.2"/>
<path d="M316 426 H377" stroke="#e8e8e8" stroke-width="0.7" stroke-dasharray="4 6.4"/>
<text x="0" y="0" transform="translate(314.6,389.42) scale(0.817,1)" font-family="Liberation Sans,sans-serif" font-size="3.4" font-weight="bold" fill="#f010f0" stroke="#f010f0" stroke-width="0.16">SEWER PROFILE</text>
<text x="0" y="0" transform="translate(314.6,392.44) scale(0.878,1)" font-family="Liberation Sans,sans-serif" font-size="2.6" font-weight="normal" fill="#f010f0" stroke="#f010f0" stroke-width="0.16">PROFILE VIEW STA0+0 (NO VERTICAL EXAGGERATION)</text>
<g clip-path="url(#mapc)">
<rect x="440" y="326" width="196" height="90" fill="#0c0c0c"/>
<rect x="440" y="326" width="196" height="90" fill="#e4e4e4" filter="url(#ctr)"/>
<rect x="440" y="326" width="40" height="90" fill="#b0b0b0" opacity="0.3"/>
<rect x="480" y="326" width="36" height="90" fill="#a0a0a0" opacity="0.16"/>
<rect x="516" y="350" width="66" height="48" fill="#0c0404" opacity="0.6"/>
<rect x="582" y="329" width="52" height="82" fill="#000" opacity="0.4"/>
<rect x="610" y="329" width="24" height="82" fill="#000" opacity="0.3"/>
<path d="M478 340.4 V409.8 M478 351 H517.8 V335 M528.6 395 V410 M552.4 397 V410 M582 335 V410 M478 397 H497 V410 M545 335 V352 H582" fill="none" stroke="#c050c8" stroke-width="0.9" opacity="0.9"/>
<path d="M517.8 351 V396 H574 Q581 395 581.6 388 V352 Z M517.8 372 H540 M548 352 V370 M560 378 V396" fill="none" stroke="#d85040" stroke-width="0.9" opacity="0.9"/>
<path d="M467.8 383.7 C478 383 484 380.6 491.2 379.2 S501 376.8 507.6 377.1 S516 380.6 521.8 380.2 S536 374.6 544.3 373.5 S570 372.2 581 372" fill="none" stroke="#e0507a" stroke-width="3.4" stroke-linecap="round"/>
<path d="M467.8 383.7 C478 383 484 380.6 491.2 379.2 S501 376.8 507.6 377.1 S516 380.6 521.8 380.2 S536 374.6 544.3 373.5 S570 372.2 581 372" fill="none" stroke="#f4a0b0" stroke-width="1" stroke-dasharray="2 1.4"/>
<path d="M544 373.6 H580" stroke="#b8a0d8" stroke-width="1.2"/>
<rect x="492" y="348" width="7" height="3" rx="1.2" fill="#e02418"/>
<rect x="507" y="349" width="9" height="3" rx="1.2" fill="#e02418"/>
<rect x="533" y="349.4" width="8" height="3" rx="1.2" fill="#e02418"/>
<rect x="546" y="350" width="6" height="2.6" rx="1.2" fill="#e02418"/>
<rect x="560" y="350.6" width="7" height="2.6" rx="1.2" fill="#e02418"/>
<rect x="522" y="360" width="6" height="4" rx="1.2" fill="#e02418"/>
<rect x="557" y="358" width="7" height="4" rx="1.2" fill="#e02418"/>
<rect x="568" y="356" width="6" height="3.6" rx="1.2" fill="#e02418"/>
<rect x="480" y="395" width="7" height="2.6" rx="1.2" fill="#e02418"/>
<rect x="489" y="399.6" width="7" height="3" rx="1.2" fill="#e02418"/>
<rect x="511" y="393" width="8" height="2.6" rx="1.2" fill="#e02418"/>
<rect x="531" y="394.6" width="9" height="3" rx="1.2" fill="#e02418"/>
<rect x="552" y="396" width="8" height="2.6" rx="1.2" fill="#e02418"/>
<rect x="568" y="390.6" width="7" height="3.6" rx="1.2" fill="#e02418"/>
<rect x="466" y="382" width="5" height="3" rx="1.2" fill="#e02418"/>
<rect x="526" y="372" width="5" height="3" rx="1.2" fill="#e02418"/>
<rect x="537" y="383" width="5" height="6" rx="1.2" fill="#e02418"/>
<rect x="548" y="381" width="4" height="7" rx="1.2" fill="#e02418"/>
<rect x="560" y="366" width="6" height="3" rx="1.2" fill="#e02418"/>
<path d="M522 366 L545 354" stroke="#e8a020" stroke-width="0.9"/>
<path d="M524 384 L548 370" stroke="#e86020" stroke-width="1"/>
<path d="M532 392 L560 378" stroke="#e8a020" stroke-width="0.8"/>
<path d="M540 388 L552 396" stroke="#4060e0" stroke-width="1"/>
<path d="M520 376 L536 390" stroke="#e02020" stroke-width="0.9"/>
<path d="M548 356 L566 368" stroke="#e04020" stroke-width="0.8"/>
<path d="M556 380 L574 392" stroke="#f08030" stroke-width="0.8"/>
<path d="M530 356 L540 366" stroke="#30a0c0" stroke-width="0.8"/>
<path d="M562 372 L578 384" stroke="#d0d020" stroke-width="0.7"/>
<path d="M526 390 L540 378" stroke="#6060e0" stroke-width="1"/>
<rect x="519" y="353" width="12" height="8" rx="1.5" fill="#c02020" opacity="0.45"/>
<rect x="534" y="356" width="10" height="6" rx="1.5" fill="#e06020" opacity="0.45"/>
<rect x="563" y="360" width="14" height="8" rx="1.5" fill="#b01818" opacity="0.45"/>
<rect x="520" y="382" width="14" height="10" rx="1.5" fill="#d03020" opacity="0.45"/>
<rect x="544" y="386" width="10" height="8" rx="1.5" fill="#e05020" opacity="0.45"/>
<rect x="562" y="384" width="14" height="8" rx="1.5" fill="#c02818" opacity="0.45"/>
<rect x="528" y="366" width="10" height="5" rx="1.5" fill="#a040c0" opacity="0.45"/>
<rect x="552" y="364" width="8" height="5" rx="1.5" fill="#e08030" opacity="0.45"/>
<rect x="553" y="336.6" width="9" height="2.2" fill="#f020e8"/>
<rect x="564" y="336" width="8" height="2.2" fill="#f020e8"/>
<rect x="573" y="337.4" width="6" height="2.2" fill="#f020e8"/>
<rect x="553" y="342" width="8" height="2.4" fill="#f020e8"/>
<rect x="563" y="343" width="8" height="2.2" fill="#f020e8"/>
<rect x="585" y="346" width="9" height="2.2" fill="#f020e8"/>
<rect x="597" y="347" width="10" height="2" fill="#f020e8"/>
<rect x="585" y="358" width="8" height="7.6" fill="#f020e8"/>
<rect x="600" y="358" width="9" height="9" fill="#f020e8"/>
<rect x="585" y="369" width="24" height="1.6" fill="#f020e8"/>
<rect x="585" y="376" width="7" height="2" fill="#f020e8"/>
<rect x="596" y="377" width="7" height="2.6" fill="#f020e8"/>
<rect x="585" y="390" width="9" height="2" fill="#f020e8"/>
<rect x="585" y="398" width="9" height="3" fill="#f020e8"/>
<rect x="598" y="399" width="8" height="2" fill="#f020e8"/>
</g>
<rect x="652" y="336.8" width="3.2" height="3.2" fill="#f8c0f0" stroke="#f010f0" stroke-width="0.8"/>
<text x="0" y="0" transform="translate(673.4,347.70) scale(1.410,1)" font-family="Liberation Sans,sans-serif" font-size="3.6" font-weight="bold" fill="#e83010" stroke="#e83010" stroke-width="0.1">ZL A</text>
<text x="0" y="0" transform="translate(651.0,353.81) scale(1.284,1)" font-family="Liberation Sans,sans-serif" font-size="2.8" font-weight="bold" fill="#e81010" stroke="#e81010" stroke-width="0.1">area</text>
<text x="0" y="0" transform="translate(651.0,359.28) scale(0.904,1)" font-family="Liberation Sans,sans-serif" font-size="3" font-weight="bold" fill="#e81010" stroke="#e81010" stroke-width="0.1">SITE lots</text>
<rect x="674" y="352.8" width="7.6" height="12.6" fill="#d81410"/>
<rect x="682.4" y="353.4" width="9.4" height="6" fill="#d81410"/>
<rect x="682.4" y="360.2" width="7" height="5.2" fill="#d81410"/>
<rect x="695.4" y="354" width="4" height="9" fill="#d81410"/>
<rect x="700.4" y="355" width="6.6" height="3" fill="#d81410"/>
<rect x="700.4" y="358.8" width="4.4" height="3.2" fill="#d81410"/>
<rect x="676.6" y="354" width="1" height="4" fill="#e8a020"/><rect x="681.6" y="353.6" width="1.2" height="6" fill="#2030c0"/>
<rect x="650" y="369.6" width="27.4" height="7.0" fill="#c81010"/><rect x="653.2" y="370.8" width="0.9" height="4.6" fill="#300"/><rect x="657.0" y="370.8" width="0.9" height="4.6" fill="#300"/><rect x="660.8" y="370.8" width="0.9" height="4.6" fill="#300"/><rect x="664.6" y="370.8" width="0.9" height="4.6" fill="#300"/><rect x="668.4" y="370.8" width="0.9" height="4.6" fill="#300"/><rect x="672.2" y="370.8" width="0.9" height="4.6" fill="#300"/><rect x="676.0" y="370.8" width="0.9" height="4.6" fill="#300"/>
<rect x="650" y="378.8" width="32.0" height="7.2" fill="#c81010"/><rect x="653.2" y="380.0" width="0.9" height="4.8" fill="#300"/><rect x="657.0" y="380.0" width="0.9" height="4.8" fill="#300"/><rect x="660.8" y="380.0" width="0.9" height="4.8" fill="#300"/><rect x="664.6" y="380.0" width="0.9" height="4.8" fill="#300"/><rect x="668.4" y="380.0" width="0.9" height="4.8" fill="#300"/><rect x="672.2" y="380.0" width="0.9" height="4.8" fill="#300"/><rect x="676.0" y="380.0" width="0.9" height="4.8" fill="#300"/><rect x="679.8" y="380.0" width="0.9" height="4.8" fill="#300"/>
<rect x="650" y="389" width="11.6" height="7.0" fill="#c81010"/><rect x="653.2" y="390.2" width="0.9" height="4.6" fill="#300"/><rect x="657.0" y="390.2" width="0.9" height="4.6" fill="#300"/>
<text x="0" y="0" transform="translate(661.0,421.12) scale(0.822,1)" font-family="Liberation Sans,sans-serif" font-size="3.4" font-weight="bold" fill="#f010f0" stroke="#f010f0" stroke-width="0.16">ROAD_CROSS_SECTION</text>
<text x="0" y="0" transform="translate(673.0,426.85) scale(1.156,1)" font-family="Liberation Sans,sans-serif" font-size="3.2" font-weight="bold" fill="#e81010" stroke="#e81010" stroke-width="0.1">NTS</text>
<text x="0" y="0" transform="translate(711.3,405.52) scale(0.939,1)" font-family="Liberation Sans,sans-serif" font-size="3.4" font-weight="bold" fill="#f010f0" stroke="#f010f0" stroke-width="0.16">CHANNEL_SCALE</text>
<rect x="708.8" y="411" width="16.9" height="6.6" fill="#3c3c3c"/><path d="M708.8 411 V417.6 M713.0 411 V417.6 M717.2 411 V417.6 M721.5 411 V417.6 M725.7 411 V417.6 M708.8 411.0 H725.7 M708.8 414.3 H725.7 M708.8 417.6 H725.7 " stroke="#ffffff" stroke-width="0.95" fill="none"/>
<rect x="727.7" y="411" width="4.3" height="10.9" fill="#3c3c3c"/><path d="M727.7 411 V421.9 M732.0 411 V421.9 M727.7 411.0 H732 M727.7 414.6 H732 M727.7 418.3 H732 M727.7 421.9 H732 " stroke="#ffffff" stroke-width="0.95" fill="none"/>
<rect x="712.3" y="424.9" width="16.4" height="11.6" fill="#3c3c3c"/><path d="M712.3 424.9 V436.5 M716.4 424.9 V436.5 M720.5 424.9 V436.5 M724.6 424.9 V436.5 M728.7 424.9 V436.5 M712.3 424.9 H728.7 M712.3 428.8 H728.7 M712.3 432.6 H728.7 M712.3 436.5 H728.7 " stroke="#ffffff" stroke-width="0.95" fill="none"/>
<rect x="712.3" y="438.2" width="16.4" height="11.4" fill="#3c3c3c"/><path d="M712.3 438.2 V449.6 M716.4 438.2 V449.6 M720.5 438.2 V449.6 M724.6 438.2 V449.6 M728.7 438.2 V449.6 M712.3 438.2 H728.7 M712.3 442.0 H728.7 M712.3 445.8 H728.7 M712.3 449.6 H728.7 " stroke="#ffffff" stroke-width="0.95" fill="none"/>
<rect x="712.3" y="449.6" width="12.7" height="5.4" fill="#3c3c3c"/><path d="M712.3 449.6 V455 M716.5 449.6 V455 M720.8 449.6 V455 M725.0 449.6 V455 M712.3 449.6 H725 M712.3 455.0 H725 " stroke="#ffffff" stroke-width="0.95" fill="none"/><rect x="712.3" y="455" width="9.1" height="5.1" fill="#3c3c3c"/><path d="M712.3 455 V460.1 M716.8 455 V460.1 M721.4 455 V460.1 M712.3 455.0 H721.4 M712.3 460.1 H721.4 " stroke="#ffffff" stroke-width="0.95" fill="none"/>
<rect x="739.2" y="422.6" width="12.1" height="9.0" fill="#3c3c3c"/><path d="M739.2 422.6 V431.6 M743.2 422.6 V431.6 M747.3 422.6 V431.6 M751.3 422.6 V431.6 M739.2 422.6 H751.3 M739.2 427.1 H751.3 M739.2 431.6 H751.3 " stroke="#ffffff" stroke-width="0.95" fill="none"/><rect x="735.2" y="431.6" width="11.8" height="3.0" fill="#3c3c3c"/><path d="M735.2 431.6 V434.6 M739.1 431.6 V434.6 M743.1 431.6 V434.6 M747.0 431.6 V434.6 M735.2 431.6 H747 M735.2 434.6 H747 " stroke="#ffffff" stroke-width="0.95" fill="none"/><rect x="735.2" y="434.6" width="4.4" height="4.0" fill="#3c3c3c"/><path d="M735.2 434.6 V438.6 M739.6 434.6 V438.6 M735.2 434.6 H739.6 M735.2 438.6 H739.6 " stroke="#ffffff" stroke-width="0.95" fill="none"/>
<path d="M735 423.4 L753 435 M733.4 435 L752 422.4" stroke="#f010f0" stroke-width="0.9"/><rect x="739" y="426.4" width="9" height="3.4" fill="#f040f0" opacity="0.8"/>
<path d="M832.9 136.3 C831.6 143 830.6 146 827 150.6 S818.3 157 818.3 162 V177 L816 187 V215" fill="none" stroke="#b41616" stroke-width="0.95" stroke-linejoin="round"/>
<path d="M788 178 L791.4 174 H814 L818.2 178.4" fill="none" stroke="#b41616" stroke-width="0.95" stroke-linejoin="round"/>
<path d="M797.6 183.4 Q793 184 793 188 V191 Q793 194 797 194 H815.5" fill="none" stroke="#b41616" stroke-width="0.95" stroke-linejoin="round"/>
<path d="M758 185.4 Q753.7 190 753.7 196 V207 Q754 213 758.7 216.5 L764 211 L768 218 Q780 216 784 212 L785.5 207 H776" fill="none" stroke="#b41616" stroke-width="0.95" stroke-linejoin="round"/>
<path d="M758 203 L794 209.3" fill="none" stroke="#b41616" stroke-width="0.95" stroke-linejoin="round"/>
<path d="M810 207.5 H834 M826 203 V212 M832 201 L835 207 V228" fill="none" stroke="#b41616" stroke-width="0.95" stroke-linejoin="round"/>
<path d="M805 212.6 V222" fill="none" stroke="#b41616" stroke-width="0.95" stroke-linejoin="round"/>
<path d="M845.4 172.9 V300 M845.4 172.9 H858 Q861 172.5 861 167 M845.4 184.3 H853 M845.4 205.6 H855 M845.4 209 H852 M845.4 212.5 H852" fill="none" stroke="#b41616" stroke-width="0.95" stroke-linejoin="round"/>
<path d="M855.2 206 V191.3 H870 Q876 191 880 188 L888 181 Q892 178 896 177.9 H919.2" fill="none" stroke="#b41616" stroke-width="0.95" stroke-linejoin="round"/>
<path d="M924 209.8 L905.5 220 Q895 228 888 232 Q878 238 866 240 L830 246.5 L814.4 249 Q800 252 784 253 Q765 252 748 249.5" fill="none" stroke="#b41616" stroke-width="0.95" stroke-linejoin="round"/>
<path d="M926.5 207.8 V218 M924.6 213.6 H928.4 M926.6 215 Q925 222 921 228 Q912 238 911.5 245 V262" fill="none" stroke="#b41616" stroke-width="0.95" stroke-linejoin="round"/>
<path d="M705.5 293.4 L748.9 243.6" fill="none" stroke="#b41616" stroke-width="0.95" stroke-linejoin="round"/>
<path d="M733.2 233.9 V240 Q736 243 740 242 L746 244 L749 243" fill="none" stroke="#b41616" stroke-width="0.95" stroke-linejoin="round"/>
<path d="M759 216 V232 L752 234 M762 216 L770 228 L766 236 L764 240 V248 H774 V251 M770 228 L780 238 L781 232 M768 222 L782 218 M773 226 Q778 224 782 224 M774 244 Q782 242 788 243 L790 248 H806" fill="none" stroke="#b41616" stroke-width="0.95" stroke-linejoin="round"/>
<path d="M797.2 225 V268.5 M805.7 215 V268.5 M815.3 215 V287 M825.5 228 V268 M835.6 215 V243 M833.8 260 V300.8 M834 228 V246" fill="none" stroke="#b41616" stroke-width="0.95" stroke-linejoin="round"/>
<path d="M854.2 225 Q854.5 220 858 219 M854.2 225 V313.7 M872.7 225 Q873 220 877 219.6 H886 M872.7 225 V316.7 M882.3 240 V288.6 M892.4 230 V270 M895.4 270 V297.6 M902.5 270 V300 M910.5 262 V316.7 M921.6 262 V316.7 M866 250 L860.4 280" fill="none" stroke="#b41616" stroke-width="0.95" stroke-linejoin="round"/>
<path d="M844 250.9 H930 Q934 251 938.7 255.3 M844 254.3 H900 M869 270.4 H926 Q929 270.2 930.7 268.4 M895.4 276 H910.5 M895.4 281.5 H910.5 M895.4 287 H910.5 M895.4 292.5 H910.5 M910.5 299 H921.6 M910.5 311.7 H930.7 L921.6 316.7 M854.2 290 H872.7 M872.7 299 H880 M862 303.5 H872.7" fill="none" stroke="#b41616" stroke-width="0.95" stroke-linejoin="round"/>
<path d="M938.7 255.3 L970.9 250 M948.8 256.3 Q951 262 955.8 262.4 H970.9 M930.7 268.4 L934 267.8 H971 M964.9 252 V268 M960 255.4 H971 M960 259 H971 M930.7 252.3 V268.4" fill="none" stroke="#b41616" stroke-width="0.95" stroke-linejoin="round"/>
<path d="M815.3 220 H812 M815.3 226 H812 M921.6 280 Q919.6 286 921.6 292" fill="none" stroke="#b41616" stroke-width="0.95" stroke-linejoin="round"/>
<path d="M815.8 196 V222" stroke="#b41616" stroke-width="2.2" stroke-dasharray="1 1.6"/>
<path d="M854.2 278 V314" stroke="#b41616" stroke-width="2.4" stroke-dasharray="0.9 5"/>
<circle cx="854.2" cy="281" r="1.6" fill="none" stroke="#b41616" stroke-width="0.8"/><circle cx="854.2" cy="298" r="1.6" fill="none" stroke="#b41616" stroke-width="0.8"/><circle cx="854.2" cy="313.6" r="1.8" fill="none" stroke="#b41616" stroke-width="0.8"/>
<path d="M791.6 207.4 L799.4 209.8 L791.6 211.4Z" fill="#d81818"/>
<rect x="799.3" y="202.5" width="10.7" height="10.1" fill="none" stroke="#b02868" stroke-width="1.1"/>
<path d="M705.5 234.9 Q722 244 742.4 249.1 Q752 252 760.9 253.7 Q772 257 784.9 258.4 L800 259.4 H900.5 M910.5 262 H920.6 L970.9 249.7" fill="none" stroke="#1616c4" stroke-width="1.5"/>
<path d="M760.9 253.7 Q765 256 766.5 260 Q769 265 777.5 267 L800 269 H869.3 L878.3 262 H900" fill="none" stroke="#1616c4" stroke-width="1.2"/>
<circle cx="789.5" cy="258.4" r="5.4" fill="#000" stroke="#b41616" stroke-width="0.9"/><circle cx="904.9" cy="261" r="5.4" fill="#000" stroke="#b41616" stroke-width="0.9"/>
<text x="0" y="0" transform="translate(785.6,260.90) scale(1.124,1)" font-family="Liberation Sans,sans-serif" font-size="6.4" font-weight="normal" fill="#b41616" stroke="#b41616" stroke-width="0.1">34</text>
<text x="0" y="0" transform="translate(900.8,263.50) scale(1.152,1)" font-family="Liberation Sans,sans-serif" font-size="6.4" font-weight="normal" fill="#b41616" stroke="#b41616" stroke-width="0.1">20</text>
<text x="0" y="0" transform="translate(721.8,201.72) scale(0.934,1)" font-family="Liberation Sans,sans-serif" font-size="7" font-weight="normal" fill="#a81616" stroke="#a81616" stroke-width="0.1">SUBJECT</text>
<text x="0" y="0" transform="translate(757.0,201.72) scale(0.972,1)" font-family="Liberation Sans,sans-serif" font-size="7" font-weight="normal" fill="#a81616" stroke="#a81616" stroke-width="0.1">PROPERTY</text>
<text x="0" y="0" transform="translate(789.9,245.64) scale(1.224,1)" font-family="Liberation Sans,sans-serif" font-size="9" font-weight="normal" fill="#4a2626" stroke="#4a2626" stroke-width="0.1">CITY</text>
<text x="0" y="0" transform="translate(822.4,245.64) scale(1.136,1)" font-family="Liberation Sans,sans-serif" font-size="9" font-weight="normal" fill="#4a2626" stroke="#4a2626" stroke-width="0.1">OF</text>
<text x="0" y="0" transform="translate(843.0,245.64) scale(1.138,1)" font-family="Liberation Sans,sans-serif" font-size="9" font-weight="normal" fill="#4a2626" stroke="#4a2626" stroke-width="0.1">PHILOMATH</text>
<g transform="translate(0,0)"><text font-style="italic" x="0" y="0" transform="translate(745.2,299.64) scale(0.897,1)" font-family="Liberation Sans,sans-serif" font-size="10.4" font-weight="normal" fill="#b81a1a" stroke="#b81a1a" stroke-width="0.1">VICINITY</text><text font-style="italic" x="0" y="0" transform="translate(793.0,299.64) scale(1.096,1)" font-family="Liberation Sans,sans-serif" font-size="10.4" font-weight="normal" fill="#b81a1a" stroke="#b81a1a" stroke-width="0.1">MAP</text></g>
<path d="M745 300.8 H817.7" stroke="#b81a1a" stroke-width="0.9"/>
<text x="0" y="0" transform="translate(773.0,308.60) scale(1.112,1)" font-family="Liberation Sans,sans-serif" font-size="6.4" font-weight="normal" fill="#a81616" stroke="#a81616" stroke-width="0.1">N.T.S</text>
<rect x="177.6" y="480.8" width="8.4" height="8.1" fill="none" stroke="#b8b8b8" stroke-width="0.9"/>
<path d="M181.8 480.8 V451.5" stroke="#1f7a1f" stroke-width="0.9"/><path d="M181.8 440.4 L178 451.6 H185.6Z" fill="none" stroke="#2c9a2c" stroke-width="0.9"/>
<path d="M186 484.7 H215" stroke="#8e1818" stroke-width="0.9"/><path d="M226.8 484.7 L215 480.6 V488.8Z" fill="none" stroke="#b42020" stroke-width="0.9"/>
<text x="181.8" y="431.8" font-family="Liberation Sans,sans-serif" font-size="9.4" fill="#c8c8c8" text-anchor="middle">Y</text>
<text x="237.7" y="488" font-family="Liberation Sans,sans-serif" font-size="9.4" fill="#c8c8c8" text-anchor="middle">X</text>
</g></svg>
<div class="ns"><div class="b" style="left:919.20px;top:105.00px;width:56.43px;height:102.73px;background:#f0f0f0;box-shadow:0 0 0 0.5px #cfcfcf;"></div>
<div class="b" style="left:919.20px;top:105.00px;width:56.43px;height:15.63px;background:#fbfbfb;"></div>
<span class="t " style="left:923.70px;top:109.30px;font-size:7px;line-height:8.40px;color:#b4b4b6;transform:scaleX(0.8741);">Hot Toggles!</span>
<div class="b" style="left:966.00px;top:109.00px;width:8.23px;height:9.73px;background:#d4d4d4;"></div>
<svg class="b" style="left:920.7px;top:122.2px" width="7.2" height="7.2" viewBox="0 0 7.2 7.2"><rect x="0.8" y="0.6" width="5.8" height="5.8" fill="#fff" stroke="#8e8e8e" stroke-width="0.6"/><path d="M1.7 3.6 L3 5 L5.4 1.9" fill="none" stroke="#5a5a5a" stroke-width="0.85"/></svg>
<span class="t " style="left:929.30px;top:121.82px;font-size:6.8px;line-height:8.16px;color:#161618;transform:scaleX(0.8000);">Point Protection</span>
<svg class="b" style="left:920.7px;top:129.8px" width="7.2" height="7.2" viewBox="0 0 7.2 7.2"><rect x="0.8" y="0.6" width="5.8" height="5.8" fill="#fff" stroke="#8e8e8e" stroke-width="0.6"/><path d="M1.7 3.6 L3 5 L5.4 1.9" fill="none" stroke="#5a5a5a" stroke-width="0.85"/></svg>
<span class="t " style="left:929.30px;top:129.42px;font-size:6.8px;line-height:8.16px;color:#161618;transform:scaleX(0.8000);">Log File Output</span>
<svg class="b" style="left:920.7px;top:137.4px" width="7.2" height="7.2" viewBox="0 0 7.2 7.2"><rect x="0.8" y="0.6" width="5.8" height="5.8" fill="#fff" stroke="#8e8e8e" stroke-width="0.6"/></svg>
<span class="t " style="left:929.30px;top:137.02px;font-size:6.8px;line-height:8.16px;color:#161618;transform:scaleX(0.8000);">Input scale</span>
<svg class="b" style="left:920.7px;top:144.9px" width="7.2" height="7.2" viewBox="0 0 7.2 7.2"><rect x="0.8" y="0.6" width="5.8" height="5.8" fill="#fff" stroke="#8e8e8e" stroke-width="0.6"/></svg>
<span class="t " style="left:929.30px;top:144.52px;font-size:6.8px;line-height:8.16px;color:#161618;transform:scaleX(0.8000);">Output scale</span>
<svg class="b" style="left:920.7px;top:152.4px" width="7.2" height="7.2" viewBox="0 0 7.2 7.2"><rect x="0.8" y="0.6" width="5.8" height="5.8" fill="#fff" stroke="#8e8e8e" stroke-width="0.6"/><path d="M1.7 3.6 L3 5 L5.4 1.9" fill="none" stroke="#5a5a5a" stroke-width="0.85"/></svg>
<span class="t " style="left:929.30px;top:152.02px;font-size:6.8px;line-height:8.16px;color:#161618;transform:scaleX(0.8000);">Draw lines/curves</span>
<svg class="b" style="left:920.7px;top:159.7px" width="7.2" height="7.2" viewBox="0 0 7.2 7.2"><rect x="0.8" y="0.6" width="5.8" height="5.8" fill="#fff" stroke="#8e8e8e" stroke-width="0.6"/><path d="M1.7 3.6 L3 5 L5.4 1.9" fill="none" stroke="#5a5a5a" stroke-width="0.85"/></svg>
<span class="t " style="left:929.30px;top:159.32px;font-size:6.8px;line-height:8.16px;color:#161618;transform:scaleX(0.8000);">Draw distances</span>
<svg class="b" style="left:920.7px;top:167.4px" width="7.2" height="7.2" viewBox="0 0 7.2 7.2"><rect x="0.8" y="0.6" width="5.8" height="5.8" fill="#fff" stroke="#8e8e8e" stroke-width="0.6"/><path d="M1.7 3.6 L3 5 L5.4 1.9" fill="none" stroke="#5a5a5a" stroke-width="0.85"/></svg>
<span class="t " style="left:929.30px;top:167.02px;font-size:6.8px;line-height:8.16px;color:#161618;transform:scaleX(0.8000);">Draw bearings</span>
<span class="t " style="left:922.00px;top:176.92px;font-size:6.8px;line-height:8.16px;color:#161618;transform:scaleX(0.7800);">Next pt:</span>
<div class="b" style="left:943.40px;top:176.00px;width:31.23px;height:9.23px;background:#fff;border:0.7px solid #9a9a9a;box-sizing:border-box;"></div>
<span class="t " style="left:945.60px;top:176.72px;font-size:6.8px;line-height:8.16px;color:#222;transform:scaleX(1.0000);">1</span>
<span class="t " style="left:923.20px;top:187.32px;font-size:6.8px;line-height:8.16px;color:#161618;transform:scaleX(0.7800);">Low pt:</span>
<div class="b" style="left:943.40px;top:186.60px;width:31.23px;height:9.43px;background:#ececec;border:0.7px solid #9a9a9a;box-sizing:border-box;"></div>
<span class="t " style="left:945.60px;top:187.32px;font-size:6.8px;line-height:8.16px;color:#222;transform:scaleX(1.0000);">1</span>
<div class="b" style="left:926.70px;top:198.60px;width:40.33px;height:7.23px;background:linear-gradient(#ededed,#d8d8d8);border:0.6px solid #a8a8a8;box-sizing:border-box;border-radius:1px;"></div>
<span class="t " style="left:937.51px;top:198.22px;font-size:6.8px;line-height:8.16px;color:#222;transform:scaleX(0.7800);">Refresh</span><div class="b" style="left:0.00px;top:104.60px;width:162.43px;height:406.43px;background:#f0f0f0;"></div>
<div class="b" style="left:162.40px;top:104.60px;width:1.83px;height:406.43px;background:#5c5c5e;"></div>
<div class="b" style="left:158.60px;top:115.00px;width:3.83px;height:396.03px;background:#f7f7f7;"></div>
<div class="b" style="left:0;top:104.8px;width:162.4px;height:10.4px;background:linear-gradient(#a9a9ab,#9a9a9c);"></div>
<div class="b" style="left:0.00px;top:104.80px;width:2.23px;height:10.43px;background:#c8c8ca;"></div>
<span class="t " style="left:6.40px;top:105.88px;font-size:8.2px;line-height:9.84px;color:#303032;transform:scaleX(0.9024);font-weight:bold;">Properties</span>
<div class="b" style="left:8.00px;top:121.40px;width:96.43px;height:10.23px;background:#e2e2e2;border:0.6px solid #b4b4b4;box-sizing:border-box;"></div>
<span class="t " style="left:10.40px;top:122.64px;font-size:6.6px;line-height:7.92px;color:#1e1e20;transform:scaleX(0.8205);">No selection</span>
<svg class="b" style="left:96.6px;top:124.6px" width="6" height="4" viewBox="0 0 6 4"><path d="M0.6 0.6 L3 3.2 L5.4 0.6" fill="none" stroke="#555" stroke-width="0.8"/></svg>
<div class="b" style="left:106.40px;top:120.80px;width:12.23px;height:11.43px;background:#e6e6e6;border:0.6px solid #c4c4c4;box-sizing:border-box;"></div>
<div class="b" style="left:119.60px;top:120.80px;width:12.23px;height:11.43px;background:#e6e6e6;border:0.6px solid #c4c4c4;box-sizing:border-box;"></div>
<div class="b" style="left:132.80px;top:120.80px;width:12.23px;height:11.43px;background:#e6e6e6;border:0.6px solid #c4c4c4;box-sizing:border-box;"></div>
<div class="b" style="left:146.00px;top:120.80px;width:12.23px;height:11.43px;background:#e6e6e6;border:0.6px solid #c4c4c4;box-sizing:border-box;"></div>
<svg class="b" style="left:108px;top:122px" width="9" height="9" viewBox="0 0 9 9"><path d="M2 0.8 V8 M0.6 2.4 L2 0.8 L3.4 2.4 M4.4 3 H8 M4.4 5 H8 M4.4 7 H8" fill="none" stroke="#222" stroke-width="0.9"/></svg>
<svg class="b" style="left:121.2px;top:122px" width="9" height="9" viewBox="0 0 9 9"><rect x="0.8" y="2" width="6" height="6" fill="#e8f4ec" stroke="#3a7a5a" stroke-width="0.8"/><circle cx="6.4" cy="2.6" r="2" fill="#4ab88a"/><path d="M3 8.4 C3 5 6 5 6.4 8.4" fill="#fff" stroke="#555" stroke-width="0.6"/></svg>
<svg class="b" style="left:134.4px;top:122px" width="9" height="9" viewBox="0 0 9 9"><circle cx="3.8" cy="5" r="3" fill="#e8ecf4" stroke="#555" stroke-width="0.8"/><rect x="5" y="1" width="3" height="6.6" fill="#d4dcec" stroke="#4a6a9a" stroke-width="0.7"/></svg>
<svg class="b" style="left:147.6px;top:122px" width="9" height="9" viewBox="0 0 9 9"><path d="M0.8 1 H6.4 L4.4 4 V8 L2.8 7 V4Z" fill="#3a7ac8"/><path d="M5 8.4 L8.4 3 L7 2.4Z" fill="#f0b030"/></svg>
<div class="b" style="left:0.00px;top:115.20px;width:6.43px;height:395.83px;background:#e4e4e4;"></div>
<div class="b" style="left:0.60px;top:136.00px;width:5.23px;height:229.03px;background:#c4c4c4;"></div>
<div class="b" style="left:6.40px;top:136.00px;width:1.63px;height:375.03px;background:#fafafa;"></div>
<div class="b" style="left:8px;top:136px;width:150.6px;height:11.1px;background:linear-gradient(#bdbdbf,#9e9ea0);"></div>
<span class="t " style="left:11.80px;top:137.38px;font-size:7.2px;line-height:8.64px;color:#1c1c1e;transform:scaleX(0.8300);font-weight:bold;">General</span>
<div class="b" style="left:150.2px;top:140.2px;width:0;height:0;border-style:solid;border-width:0 2.2px 2.8px 2.2px;border-color:transparent transparent #1c1c1e transparent;"></div>
<div class="b" style="left:8.00px;top:147.10px;width:150.63px;height:89.39px;background:#f1f1f1;"></div>
<div class="b" style="left:87.50px;top:147.10px;width:71.13px;height:11.20px;background:#ffffff;"></div>
<div class="b" style="left:16.50px;top:157.00px;width:142.13px;height:1.03px;background:#c9c9cb;"></div>
<span class="t " style="left:19.00px;top:148.72px;font-size:6.8px;line-height:8.16px;color:#1e1e20;transform:scaleX(0.7900);">Color</span>
<div class="b" style="left:89.40px;top:148.70px;width:7.03px;height:7.43px;background:#f010e0;border:0.6px solid #5a0a5a;box-sizing:border-box;"></div>
<span class="t " style="left:98.20px;top:148.72px;font-size:6.8px;line-height:8.16px;color:#1e1e20;transform:scaleX(0.7900);">ByLayer</span>
<div class="b" style="left:87.50px;top:158.27px;width:71.13px;height:11.20px;background:#ffffff;"></div>
<div class="b" style="left:16.50px;top:168.00px;width:142.13px;height:1.03px;background:#c9c9cb;"></div>
<span class="t " style="left:19.00px;top:159.89px;font-size:6.8px;line-height:8.16px;color:#1e1e20;transform:scaleX(0.7900);">Layer</span>
<span class="t " style="left:89.60px;top:159.89px;font-size:6.8px;line-height:8.16px;color:#1e1e20;transform:scaleX(0.7900);">G-CONSTRUCTION</span>
<div class="b" style="left:87.50px;top:169.44px;width:71.13px;height:11.20px;background:#ffffff;"></div>
<div class="b" style="left:16.50px;top:180.00px;width:142.13px;height:1.03px;background:#c9c9cb;"></div>
<span class="t " style="left:19.00px;top:171.06px;font-size:6.8px;line-height:8.16px;color:#1e1e20;transform:scaleX(0.7900);">Linetype</span>
<div class="b" style="left:90.00px;top:174.94px;width:15.63px;height:0.73px;background:#444;"></div>
<span class="t " style="left:108.00px;top:171.06px;font-size:6.8px;line-height:8.16px;color:#1e1e20;transform:scaleX(0.7900);">ByLayer</span>
<div class="b" style="left:87.50px;top:180.61px;width:71.13px;height:11.20px;background:#ffffff;"></div>
<div class="b" style="left:16.50px;top:191.00px;width:142.13px;height:1.03px;background:#c9c9cb;"></div>
<span class="t " style="left:19.00px;top:182.23px;font-size:6.8px;line-height:8.16px;color:#1e1e20;transform:scaleX(0.7900);">Linetype scale</span>
<span class="t " style="left:89.60px;top:182.23px;font-size:6.8px;line-height:8.16px;color:#1e1e20;transform:scaleX(0.7900);">1.000</span>
<div class="b" style="left:87.50px;top:191.78px;width:71.13px;height:11.20px;background:#ffffff;"></div>
<div class="b" style="left:16.50px;top:202.00px;width:142.13px;height:1.03px;background:#c9c9cb;"></div>
<span class="t " style="left:19.00px;top:193.40px;font-size:6.8px;line-height:8.16px;color:#1e1e20;transform:scaleX(0.7900);">Lineweight</span>
<span class="t " style="left:108.00px;top:193.40px;font-size:6.8px;line-height:8.16px;color:#1e1e20;transform:scaleX(0.7900);">Default</span>
<div class="b" style="left:87.50px;top:202.95px;width:71.13px;height:11.20px;background:#ffffff;"></div>
<div class="b" style="left:16.50px;top:213.00px;width:142.13px;height:1.03px;background:#c9c9cb;"></div>
<span class="t " style="left:19.00px;top:204.57px;font-size:6.8px;line-height:8.16px;color:#1e1e20;transform:scaleX(0.7900);">Width</span>
<span class="t " style="left:89.60px;top:204.57px;font-size:6.8px;line-height:8.16px;color:#1e1e20;transform:scaleX(0.7900);">8383.634</span>
<div class="b" style="left:87.50px;top:214.12px;width:71.13px;height:11.20px;background:#ffffff;"></div>
<div class="b" style="left:16.50px;top:224.00px;width:142.13px;height:1.03px;background:#c9c9cb;"></div>
<span class="t " style="left:19.00px;top:215.74px;font-size:6.8px;line-height:8.16px;color:#1e1e20;transform:scaleX(0.7900);">Thickness</span>
<span class="t " style="left:89.60px;top:215.74px;font-size:6.8px;line-height:8.16px;color:#1e1e20;transform:scaleX(0.7900);">0</span>
<div class="b" style="left:87.50px;top:225.29px;width:71.13px;height:11.20px;background:#ffffff;"></div>
<div class="b" style="left:16.50px;top:235.00px;width:142.13px;height:1.03px;background:#c9c9cb;"></div>
<span class="t " style="left:19.00px;top:226.91px;font-size:6.8px;line-height:8.16px;color:#1e1e20;transform:scaleX(0.7900);">Transparency</span>
<span class="t " style="left:89.60px;top:226.91px;font-size:6.8px;line-height:8.16px;color:#1e1e20;transform:scaleX(0.7900);">ByLayer</span>
<div class="b" style="left:16.00px;top:147.10px;width:1.03px;height:89.39px;background:#c9c9cb;"></div>
<div class="b" style="left:87.00px;top:147.10px;width:1.03px;height:89.39px;background:#c9c9cb;"></div>
<div class="b" style="left:158.00px;top:147.10px;width:1.03px;height:89.39px;background:#c9c9cb;"></div>
<div class="b" style="left:8px;top:239.1px;width:150.6px;height:11.1px;background:linear-gradient(#bdbdbf,#9e9ea0);"></div>
<span class="t " style="left:11.80px;top:240.48px;font-size:7.2px;line-height:8.64px;color:#1c1c1e;transform:scaleX(0.8300);font-weight:bold;">3D Visualization</span>
<div class="b" style="left:150.2px;top:243.29999999999998px;width:0;height:0;border-style:solid;border-width:0 2.2px 2.8px 2.2px;border-color:transparent transparent #1c1c1e transparent;"></div>
<div class="b" style="left:8.00px;top:250.20px;width:150.63px;height:22.37px;background:#f1f1f1;"></div>
<div class="b" style="left:87.50px;top:250.20px;width:71.13px;height:11.20px;background:#ffffff;"></div>
<div class="b" style="left:16.50px;top:260.00px;width:142.13px;height:1.03px;background:#c9c9cb;"></div>
<span class="t " style="left:19.00px;top:251.82px;font-size:6.8px;line-height:8.16px;color:#1e1e20;transform:scaleX(0.7900);">Material</span>
<span class="t " style="left:89.60px;top:251.82px;font-size:6.8px;line-height:8.16px;color:#1e1e20;transform:scaleX(0.7900);">ByLayer</span>
<div class="b" style="left:87.50px;top:261.37px;width:71.13px;height:11.20px;background:#ffffff;"></div>
<div class="b" style="left:16.50px;top:272.00px;width:142.13px;height:1.03px;background:#c9c9cb;"></div>
<span class="t " style="left:19.00px;top:262.99px;font-size:6.8px;line-height:8.16px;color:#1e1e20;transform:scaleX(0.7900);">Shadow display</span>
<span class="t " style="left:89.60px;top:262.99px;font-size:6.8px;line-height:8.16px;color:#1e1e20;transform:scaleX(0.7900);">Shadows cast and received</span>
<div class="b" style="left:16.00px;top:250.20px;width:1.03px;height:22.37px;background:#c9c9cb;"></div>
<div class="b" style="left:87.00px;top:250.20px;width:1.03px;height:22.37px;background:#c9c9cb;"></div>
<div class="b" style="left:158.00px;top:250.20px;width:1.03px;height:22.37px;background:#c9c9cb;"></div>
<div class="b" style="left:8px;top:274.7px;width:150.6px;height:11.1px;background:linear-gradient(#bdbdbf,#9e9ea0);"></div>
<span class="t " style="left:11.80px;top:276.08px;font-size:7.2px;line-height:8.64px;color:#1c1c1e;transform:scaleX(0.8300);font-weight:bold;">Print style</span>
<div class="b" style="left:150.2px;top:278.9px;width:0;height:0;border-style:solid;border-width:0 2.2px 2.8px 2.2px;border-color:transparent transparent #1c1c1e transparent;"></div>
<div class="b" style="left:8.00px;top:285.80px;width:150.63px;height:44.71px;background:#f1f1f1;"></div>
<div class="b" style="left:87.50px;top:285.80px;width:71.13px;height:11.20px;background:#ffffff;"></div>
<div class="b" style="left:16.50px;top:296.00px;width:142.13px;height:1.03px;background:#c9c9cb;"></div>
<span class="t " style="left:19.00px;top:287.42px;font-size:6.8px;line-height:8.16px;color:#1e1e20;transform:scaleX(0.7900);">Print style</span>
<span class="t " style="left:89.60px;top:287.42px;font-size:6.8px;line-height:8.16px;color:#1e1e20;transform:scaleX(0.7900);">ByColor</span>
<div class="b" style="left:87.50px;top:296.97px;width:71.13px;height:11.20px;background:#ffffff;"></div>
<div class="b" style="left:16.50px;top:307.00px;width:142.13px;height:1.03px;background:#c9c9cb;"></div>
<span class="t " style="left:19.00px;top:298.59px;font-size:6.8px;line-height:8.16px;color:#1e1e20;transform:scaleX(0.7900);">Print style table</span>
<span class="t " style="left:89.60px;top:298.59px;font-size:6.8px;line-height:8.16px;color:#1e1e20;transform:scaleX(0.7900);">None</span>
<div class="b" style="left:16.50px;top:318.00px;width:142.13px;height:1.03px;background:#c9c9cb;"></div>
<span class="t " style="left:19.00px;top:309.76px;font-size:6.8px;line-height:8.16px;color:#1e1e20;transform:scaleX(0.7900);">Print table attached to</span>
<span class="t " style="left:89.60px;top:309.76px;font-size:6.8px;line-height:8.16px;color:#1e1e20;transform:scaleX(0.7900);">Model</span>
<div class="b" style="left:16.50px;top:329.00px;width:142.13px;height:1.03px;background:#c9c9cb;"></div>
<span class="t " style="left:19.00px;top:320.93px;font-size:6.8px;line-height:8.16px;color:#1e1e20;transform:scaleX(0.7900);">Print table type</span>
<span class="t " style="left:89.60px;top:320.93px;font-size:6.8px;line-height:8.16px;color:#1e1e20;transform:scaleX(0.7900);">Color-dependent print style</span>
<div class="b" style="left:16.00px;top:285.80px;width:1.03px;height:44.71px;background:#c9c9cb;"></div>
<div class="b" style="left:87.00px;top:285.80px;width:1.03px;height:44.71px;background:#c9c9cb;"></div>
<div class="b" style="left:158.00px;top:285.80px;width:1.03px;height:44.71px;background:#c9c9cb;"></div>
<div class="b" style="left:8px;top:333px;width:150.6px;height:11.1px;background:linear-gradient(#bdbdbf,#9e9ea0);"></div>
<span class="t " style="left:11.80px;top:334.38px;font-size:7.2px;line-height:8.64px;color:#1c1c1e;transform:scaleX(0.8300);font-weight:bold;">View</span>
<div class="b" style="left:150.2px;top:337.2px;width:0;height:0;border-style:solid;border-width:0 2.2px 2.8px 2.2px;border-color:transparent transparent #1c1c1e transparent;"></div>
<div class="b" style="left:8.00px;top:344.10px;width:150.63px;height:55.88px;background:#f1f1f1;"></div>
<div class="b" style="left:16.50px;top:354.00px;width:142.13px;height:1.03px;background:#c9c9cb;"></div>
<span class="t " style="left:19.00px;top:345.72px;font-size:6.8px;line-height:8.16px;color:#1e1e20;transform:scaleX(0.7900);">Center X</span>
<span class="t " style="left:89.60px;top:345.72px;font-size:6.8px;line-height:8.16px;color:#1e1e20;transform:scaleX(0.7900);">5117.670</span>
<div class="b" style="left:16.50px;top:365.00px;width:142.13px;height:1.03px;background:#c9c9cb;"></div>
<span class="t " style="left:19.00px;top:356.89px;font-size:6.8px;line-height:8.16px;color:#1e1e20;transform:scaleX(0.7900);">Center Y</span>
<span class="t " style="left:89.60px;top:356.89px;font-size:6.8px;line-height:8.16px;color:#1e1e20;transform:scaleX(0.7900);">5729.840</span>
<div class="b" style="left:16.50px;top:377.00px;width:142.13px;height:1.03px;background:#c9c9cb;"></div>
<span class="t " style="left:19.00px;top:368.06px;font-size:6.8px;line-height:8.16px;color:#1e1e20;transform:scaleX(0.7900);">Center Z</span>
<span class="t " style="left:89.60px;top:368.06px;font-size:6.8px;line-height:8.16px;color:#1e1e20;transform:scaleX(0.7900);">0</span>
<div class="b" style="left:16.50px;top:388.00px;width:142.13px;height:1.03px;background:#c9c9cb;"></div>
<span class="t " style="left:19.00px;top:379.23px;font-size:6.8px;line-height:8.16px;color:#1e1e20;transform:scaleX(0.7900);">Width</span>
<span class="t " style="left:89.60px;top:379.23px;font-size:6.8px;line-height:8.16px;color:#1e1e20;transform:scaleX(0.7900);">8383.634</span>
<div class="b" style="left:16.50px;top:399.00px;width:142.13px;height:1.03px;background:#c9c9cb;"></div>
<span class="t " style="left:19.00px;top:390.40px;font-size:6.8px;line-height:8.16px;color:#1e1e20;transform:scaleX(0.7900);">Height</span>
<span class="t " style="left:89.60px;top:390.40px;font-size:6.8px;line-height:8.16px;color:#1e1e20;transform:scaleX(0.7900);">4081.644</span>
<div class="b" style="left:16.00px;top:344.10px;width:1.03px;height:55.88px;background:#c9c9cb;"></div>
<div class="b" style="left:87.00px;top:344.10px;width:1.03px;height:55.88px;background:#c9c9cb;"></div>
<div class="b" style="left:158.00px;top:344.10px;width:1.03px;height:55.88px;background:#c9c9cb;"></div>
<div class="b" style="left:8px;top:402.7px;width:150.6px;height:11.1px;background:linear-gradient(#bdbdbf,#9e9ea0);"></div>
<span class="t " style="left:11.80px;top:404.08px;font-size:7.2px;line-height:8.64px;color:#1c1c1e;transform:scaleX(0.8300);font-weight:bold;">Visual Style</span>
<div class="b" style="left:150.2px;top:406.9px;width:0;height:0;border-style:solid;border-width:0 2.2px 2.8px 2.2px;border-color:transparent transparent #1c1c1e transparent;"></div>
<div class="b" style="left:8.00px;top:413.80px;width:150.63px;height:97.23px;background:#f1f1f1;"></div>
<div class="b" style="left:87.50px;top:413.80px;width:71.13px;height:11.20px;background:#ffffff;"></div>
<div class="b" style="left:16.50px;top:424.00px;width:142.13px;height:1.03px;background:#c9c9cb;"></div>
<span class="t " style="left:19.00px;top:415.42px;font-size:6.8px;line-height:8.16px;color:#1e1e20;transform:scaleX(0.7900);">Visual style</span>
<span class="t " style="left:89.60px;top:415.42px;font-size:6.8px;line-height:8.16px;color:#1e1e20;transform:scaleX(0.7900);">2D Wireframe</span>
<div class="b" style="left:87.50px;top:424.97px;width:71.13px;height:11.20px;background:#ffffff;"></div>
<div class="b" style="left:16.50px;top:435.00px;width:142.13px;height:1.03px;background:#c9c9cb;"></div>
<span class="t " style="left:19.00px;top:426.59px;font-size:6.8px;line-height:8.16px;color:#1e1e20;transform:scaleX(0.7900);">Background</span>
<span class="t " style="left:89.60px;top:426.59px;font-size:6.8px;line-height:8.16px;color:#1e1e20;transform:scaleX(0.7900);">On</span>
<div class="b" style="left:87.50px;top:436.14px;width:71.13px;height:11.20px;background:#ffffff;"></div>
<div class="b" style="left:16.50px;top:446.00px;width:142.13px;height:1.03px;background:#c9c9cb;"></div>
<span class="t " style="left:19.00px;top:437.76px;font-size:6.8px;line-height:8.16px;color:#1e1e20;transform:scaleX(0.7900);">Material mode</span>
<span class="t " style="left:89.60px;top:437.76px;font-size:6.8px;line-height:8.16px;color:#1e1e20;transform:scaleX(0.7900);">None</span>
<div class="b" style="left:87.50px;top:447.31px;width:71.13px;height:11.20px;background:#ffffff;"></div>
<div class="b" style="left:16.50px;top:457.00px;width:142.13px;height:1.03px;background:#c9c9cb;"></div>
<span class="t " style="left:19.00px;top:448.93px;font-size:6.8px;line-height:8.16px;color:#1e1e20;transform:scaleX(0.7900);">Halo gap</span>
<span class="t " style="left:89.60px;top:448.93px;font-size:6.8px;line-height:8.16px;color:#1e1e20;transform:scaleX(0.7900);">0</span>
<div class="b" style="left:87.50px;top:458.48px;width:71.13px;height:11.20px;background:#ffffff;"></div>
<div class="b" style="left:16.50px;top:469.00px;width:142.13px;height:1.03px;background:#c9c9cb;"></div>
<span class="t " style="left:19.00px;top:460.10px;font-size:6.8px;line-height:8.16px;color:#1e1e20;transform:scaleX(0.7900);">Face opacity</span>
<span class="t " style="left:89.60px;top:460.10px;font-size:6.8px;line-height:8.16px;color:#1e1e20;transform:scaleX(0.7900);">-60</span>
<div class="b" style="left:87.50px;top:469.65px;width:71.13px;height:11.20px;background:#ffffff;"></div>
<div class="b" style="left:16.50px;top:480.00px;width:142.13px;height:1.03px;background:#c9c9cb;"></div>
<span class="t " style="left:19.00px;top:471.27px;font-size:6.8px;line-height:8.16px;color:#1e1e20;transform:scaleX(0.7900);">Face style</span>
<span class="t " style="left:89.60px;top:471.27px;font-size:6.8px;line-height:8.16px;color:#1e1e20;transform:scaleX(0.7900);">None</span>
<div class="b" style="left:87.50px;top:480.82px;width:71.13px;height:11.20px;background:#ffffff;"></div>
<div class="b" style="left:16.50px;top:491.00px;width:142.13px;height:1.03px;background:#c9c9cb;"></div>
<span class="t " style="left:19.00px;top:482.44px;font-size:6.8px;line-height:8.16px;color:#1e1e20;transform:scaleX(0.7900);">Face highlight</span>
<span class="t " style="left:89.60px;top:482.44px;font-size:6.8px;line-height:8.16px;color:#1e1e20;transform:scaleX(0.7900);">-30</span>
<div class="b" style="left:87.50px;top:491.99px;width:71.13px;height:11.20px;background:#ffffff;"></div>
<div class="b" style="left:16.50px;top:502.00px;width:142.13px;height:1.03px;background:#c9c9cb;"></div>
<span class="t " style="left:19.00px;top:493.61px;font-size:6.8px;line-height:8.16px;color:#1e1e20;transform:scaleX(0.7900);">Edges</span>
<span class="t " style="left:89.60px;top:493.61px;font-size:6.8px;line-height:8.16px;color:#1e1e20;transform:scaleX(0.7900);">Isolines</span>
<div class="b" style="left:87.50px;top:503.16px;width:71.13px;height:7.87px;background:#ffffff;"></div>
<div class="b" style="left:16.50px;top:510.00px;width:142.13px;height:1.03px;background:#c9c9cb;"></div>
<span class="t " style="left:19.00px;top:504.78px;font-size:6.8px;line-height:8.16px;color:#1e1e20;transform:scaleX(0.7900);">Edge jitter</span>
<span class="t " style="left:89.60px;top:504.78px;font-size:6.8px;line-height:8.16px;color:#1e1e20;transform:scaleX(0.7900);">-2</span>
<div class="b" style="left:16.00px;top:413.80px;width:1.03px;height:97.23px;background:#c9c9cb;"></div>
<div class="b" style="left:87.00px;top:413.80px;width:1.03px;height:97.23px;background:#c9c9cb;"></div>
<div class="b" style="left:158.00px;top:413.80px;width:1.03px;height:97.23px;background:#c9c9cb;"></div>
<div class="b" style="left:0.00px;top:511.00px;width:980.03px;height:3.03px;background:#4e4e50;"></div></div>
<div class="ns"><div class="b" style="left:164.20px;top:501.30px;width:815.83px;height:9.73px;background:linear-gradient(#efefef,#e0e0e0);"></div>
<div class="b" style="left:164.20px;top:501.20px;width:815.83px;height:0.63px;background:#bdbdbd;"></div>
<div class="b" style="left:164.80px;top:502.20px;width:40.23px;height:8.23px;background:#f6f6f6;"></div>
<svg class="b" style="left:164px;top:502.4px" width="34" height="8" viewBox="0 0 34 8"><path d="M2.6 1.6 V6.4" stroke="#222" stroke-width="0.8"/><path d="M5.8 1.6 L3.2 4 L5.8 6.4Z M14 1.6 L11.4 4 L14 6.4Z M19.6 1.6 L22.2 4 L19.6 6.4Z M27 1.6 L29.6 4 L27 6.4Z" fill="#222"/><path d="M30.4 1.6 V6.4" stroke="#222" stroke-width="0.8"/><path d="M8.6 0.6 V7.4 M16.6 0.6 V7.4 M24.6 0.6 V7.4 M32.6 0.6 V7.4" stroke="#cfcfcf" stroke-width="0.6"/></svg>
<svg class="b" style="left:198px;top:502.8px" width="7" height="7" viewBox="0 0 7 7"><path d="M3.5 0.4 V6.6 M0.4 3.5 H6.6" stroke="#111" stroke-width="1.3"/></svg>
<svg class="b" style="left:204px;top:501.3px" width="240" height="10" viewBox="0 0 240 10"><path d="M1.4 0.8 L4.4 9.2 H27.4 L25.6 0.8Z" fill="#fdfdfd"/><path d="M1.4 0.8 L4.4 9.2" stroke="#444" stroke-width="0.7"/><path d="M25.7 1.2 L28.9 9.4 M27.2 5.2 L25.2 9.4" fill="none" stroke="#2c2c2c" stroke-width="0.75"/><path d="M41.1 1.2 L44.3 9.4 M42.6 5.2 L40.6 9.4" fill="none" stroke="#2c2c2c" stroke-width="0.75"/><path d="M55.7 1.2 L58.9 9.4 M57.2 5.2 L55.2 9.4" fill="none" stroke="#2c2c2c" stroke-width="0.75"/><path d="M70.3 1.2 L73.5 9.4 M71.8 5.2 L69.8 9.4" fill="none" stroke="#2c2c2c" stroke-width="0.75"/><path d="M85.3 1.2 L88.5 9.4 M86.8 5.2 L84.8 9.4" fill="none" stroke="#2c2c2c" stroke-width="0.75"/><path d="M100.3 1.2 L103.5 9.4 M101.8 5.2 L99.8 9.4" fill="none" stroke="#2c2c2c" stroke-width="0.75"/><path d="M115.1 1.2 L118.3 9.4 M116.6 5.2 L114.6 9.4" fill="none" stroke="#2c2c2c" stroke-width="0.75"/><path d="M129.7 1.2 L132.9 9.4 M131.2 5.2 L129.2 9.4" fill="none" stroke="#2c2c2c" stroke-width="0.75"/><path d="M144.5 1.2 L147.7 9.4 M146.0 5.2 L144.0 9.4" fill="none" stroke="#2c2c2c" stroke-width="0.75"/><path d="M159.3 1.2 L162.5 9.4 M160.8 5.2 L158.8 9.4" fill="none" stroke="#2c2c2c" stroke-width="0.75"/><path d="M178.1 1.2 L181.3 9.4 M179.6 5.2 L177.6 9.4" fill="none" stroke="#2c2c2c" stroke-width="0.75"/><path d="M203.7 1.2 L206.9 9.4 M205.2 5.2 L203.2 9.4" fill="none" stroke="#2c2c2c" stroke-width="0.75"/><path d="M230.6 9.4 L233.6 1.4" stroke="#333" stroke-width="0.75"/></svg>
<span class="t " style="left:211.20px;top:502.34px;font-size:6.6px;line-height:7.92px;color:#111;transform:scaleX(0.8812);font-weight:bold;">Model</span>
<span class="t " style="left:235.29px;top:502.34px;font-size:6.6px;line-height:7.92px;color:#38383a;transform:scaleX(0.8800);">C1</span>
<span class="t " style="left:250.29px;top:502.34px;font-size:6.6px;line-height:7.92px;color:#38383a;transform:scaleX(0.8800);">C2</span>
<span class="t " style="left:264.79px;top:502.34px;font-size:6.6px;line-height:7.92px;color:#38383a;transform:scaleX(0.8800);">C3</span>
<span class="t " style="left:279.29px;top:502.34px;font-size:6.6px;line-height:7.92px;color:#38383a;transform:scaleX(0.8800);">C4</span>
<span class="t " style="left:294.29px;top:502.34px;font-size:6.6px;line-height:7.92px;color:#38383a;transform:scaleX(0.8800);">C5</span>
<span class="t " style="left:309.29px;top:502.34px;font-size:6.6px;line-height:7.92px;color:#38383a;transform:scaleX(0.8800);">C6</span>
<span class="t " style="left:324.29px;top:502.34px;font-size:6.6px;line-height:7.92px;color:#38383a;transform:scaleX(0.8800);">C7</span>
<span class="t " style="left:338.79px;top:502.34px;font-size:6.6px;line-height:7.92px;color:#38383a;transform:scaleX(0.8800);">C8</span>
<span class="t " style="left:353.29px;top:502.34px;font-size:6.6px;line-height:7.92px;color:#38383a;transform:scaleX(0.8800);">C9</span>
<span class="t " style="left:368.67px;top:502.34px;font-size:6.6px;line-height:7.92px;color:#38383a;transform:scaleX(0.8800);">C10</span>
<span class="t " style="left:387.02px;top:502.34px;font-size:6.6px;line-height:7.92px;color:#38383a;transform:scaleX(0.8800);">MISC1</span>
<span class="t " style="left:413.52px;top:502.34px;font-size:6.6px;line-height:7.92px;color:#38383a;transform:scaleX(0.8800);">MISC2</span></div>
<div class="b" style="left:0.00px;top:514.00px;width:980.03px;height:67.83px;background:#ffffff;"></div>
<div class="b" style="left:0.00px;top:514.00px;width:10.63px;height:67.43px;background:#a9a9ab;"></div>
<div class="b" style="left:977.40px;top:514.00px;width:2.63px;height:67.83px;background:#5a5a5c;"></div>
<svg class="b" style="left:3px;top:515.6px" width="5" height="5" viewBox="0 0 5 5"><path d="M0.5 0.5 L4.5 4.5 M4.5 0.5 L0.5 4.5" stroke="#222" stroke-width="0.9"/></svg>
<div class="b tri" style="left:3.2px;top:527.6px;border-width:2.4px 2.2px 0 2.2px;border-top-color:#111"></div>
<span class="t m" style="left:11.4px;top:514.40px;font-size:6.75px;line-height:8.4px;color:#1c1c1c;">Cancel</span>
<span class="t m" style="left:11.4px;top:521.52px;font-size:6.75px;line-height:8.4px;color:#1c1c1c;">Command:</span>
<span class="t m" style="left:11.4px;top:528.64px;font-size:6.75px;line-height:8.4px;color:#1c1c1c;">Cancel</span>
<span class="t m" style="left:11.4px;top:535.76px;font-size:6.75px;line-height:8.4px;color:#1c1c1c;">Command:</span>
<span class="t m" style="left:11.4px;top:542.88px;font-size:6.75px;line-height:8.4px;color:#1c1c1c;">Cancel</span>
<span class="t m" style="left:11.4px;top:550.00px;font-size:6.75px;line-height:8.4px;color:#1c1c1c;">Command:</span>
<span class="t m" style="left:11.4px;top:557.12px;font-size:6.75px;line-height:8.4px;color:#1c1c1c;">Cancel</span>
<div class="b" style="left:10.60px;top:570.20px;width:966.83px;height:0.83px;background:#c4c4c4;"></div>
<span class="t m" style="left:11.4px;top:572.20px;font-size:6.4px;line-height:8.4px;color:#1c1c1c;">Command:</span>
<div class="b" style="left:969.60px;top:514.00px;width:7.83px;height:56.23px;background:#f0f0f0;"></div>
<div class="b" style="left:970.60px;top:551.60px;width:6.03px;height:10.43px;background:#c6c6c6;"></div>
<svg class="b" style="left:971px;top:564px" width="5" height="4" viewBox="0 0 5 4"><path d="M0.5 0.6 L2.5 3 L4.5 0.6" fill="none" stroke="#444" stroke-width="0.9"/></svg>
<div class="b" style="left:0.00px;top:581.80px;width:980.03px;height:14.23px;background:#2c2c2f;"></div>
<div class="b" style="left:0.00px;top:581.80px;width:980.03px;height:3.63px;background:linear-gradient(#45454f,#2f2f33);"></div>
<div class="b" style="left:550.20px;top:584.00px;width:0.73px;height:12.03px;background:#1a1a1c;"></div>
<span class="t " style="left:552.40px;top:586.12px;font-size:6.3px;line-height:7.56px;color:#e8e8e8;transform:scaleX(0.8855);">4398.923,6626.962,0.000</span>
<div class="b" style="left:632.10px;top:584.00px;width:11.23px;height:12.03px;background:#c9c9c9;border-radius:1px;"></div><svg class="b" style="left:632.7px;top:585px" width="10" height="10" viewBox="0 0 10 10"><rect x="0.6" y="0.6" width="8.8" height="8.8" fill="#e4e4e8"/><path d="M0.8 9.2 L9.2 0.8" stroke="#e04040" stroke-width="0.9"/><path d="M0.8 9.2 H9.2 V4Z" fill="#50b8c8" opacity="0.8"/></svg>
<svg class="b" style="left:648.4px;top:585px" width="10" height="10" viewBox="0 0 10 10"><path d="M5 1 V9 M1 5 H9" stroke="#d82020" stroke-width="1"/><path d="M3.6 5 H6.4" stroke="#40c040" stroke-width="1.2"/></svg>
<svg class="b" style="left:662.6px;top:585px" width="10" height="10" viewBox="0 0 10 10"><path d="M5 1 V5.4 M5 5.4 L1.2 8.6 M5 5.4 L8.8 8.6" stroke="#e6e6e6" stroke-width="1.5" fill="none"/></svg>
<span class="t " style="left:675.60px;top:586.12px;font-size:6.3px;line-height:7.56px;color:#e0e0e0;transform:scaleX(0.9786);">1:20</span>
<svg class="b" style="left:691.0px;top:585px" width="10" height="10" viewBox="0 0 10 10"><path d="M5 1 V5.4 M5 5.4 L1.2 8.6 M5 5.4 L8.8 8.6" stroke="#e6e6e6" stroke-width="1.5" fill="none"/><circle cx="8" cy="3" r="1.3" fill="#6090e0"/></svg>
<svg class="b" style="left:706.0px;top:585px" width="10" height="10" viewBox="0 0 10 10"><path d="M5 1 V5.4 M5 5.4 L1.2 8.6 M5 5.4 L8.8 8.6" stroke="#e6e6e6" stroke-width="1.5" fill="none"/><circle cx="8" cy="3" r="1.3" fill="#e0a030"/></svg>
<svg class="b" style="left:721.4px;top:585px" width="10" height="10" viewBox="0 0 10 10"><rect x="1.2" y="1.2" width="1.3" height="1.3" fill="#d8d8d8"/><rect x="1.2" y="4.0" width="1.3" height="1.3" fill="#d8d8d8"/><rect x="1.2" y="6.8" width="1.3" height="1.3" fill="#e02020"/><rect x="4.0" y="1.2" width="1.3" height="1.3" fill="#d8d8d8"/><rect x="4.0" y="4.0" width="1.3" height="1.3" fill="#d8d8d8"/><rect x="4.0" y="6.8" width="1.3" height="1.3" fill="#d8d8d8"/><rect x="6.8" y="1.2" width="1.3" height="1.3" fill="#d8d8d8"/><rect x="6.8" y="4.0" width="1.3" height="1.3" fill="#d8d8d8"/><rect x="6.8" y="6.8" width="1.3" height="1.3" fill="#d8d8d8"/></svg>
<svg class="b" style="left:736.5px;top:585px" width="10" height="10" viewBox="0 0 10 10"><path d="M3.2 0.6 V9.4 M6.8 0.6 V9.4 M0.6 3.2 H9.4 M0.6 6.8 H9.4" stroke="#e6e6e6" stroke-width="1"/></svg>
<div class="b" style="left:751.10px;top:584.00px;width:11.23px;height:12.03px;background:#c9c9c9;border-radius:1px;"></div><svg class="b" style="left:751.7px;top:585px" width="10" height="10" viewBox="0 0 10 10"><rect x="1.4" y="1.4" width="7.2" height="7.2" fill="#6a6a6e"/><path d="M2.4 6.6 H7.6" stroke="#e0e0e0" stroke-width="1"/><rect x="2.4" y="2.6" width="2" height="2" fill="#e0e0e0"/></svg>
<svg class="b" style="left:767.4px;top:585px" width="10" height="10" viewBox="0 0 10 10"><path d="M2 1 V6" stroke="#40c040" stroke-width="1.1"/><path d="M2 6 H6 V8.6 H9.4" stroke="#d82020" stroke-width="1.1" fill="none"/></svg>
<svg class="b" style="left:783.0px;top:585px" width="10" height="10" viewBox="0 0 10 10"><circle cx="5" cy="5" r="3.4" fill="none" stroke="#e6e6e6" stroke-width="1.1"/><circle cx="5" cy="5" r="1.6" fill="#8a2020"/></svg>
<div class="b" style="left:797.40px;top:584.00px;width:11.23px;height:12.03px;background:#c9c9c9;border-radius:1px;"></div><svg class="b" style="left:798.0px;top:585px" width="10" height="10" viewBox="0 0 10 10"><rect x="1.6" y="1.6" width="6.8" height="6.8" fill="#a8a8ac" stroke="#707074" stroke-width="0.8"/><rect x="0.8" y="0.8" width="2" height="2" fill="#e03030"/></svg>
<svg class="b" style="left:813.4px;top:585px" width="10" height="10" viewBox="0 0 10 10"><path d="M1 8.6 H9 M1 8.6 L8 1.6" stroke="#e6e6e6" stroke-width="1" fill="none"/><path d="M4 8.4 Q4.6 6.6 3.4 6" stroke="#e6e6e6" stroke-width="0.7" fill="none"/></svg>
<svg class="b" style="left:828.7px;top:585px" width="10" height="10" viewBox="0 0 10 10"><path d="M1 2 H9 M1 5 H9 M1 8 H9" stroke="#e6e6e6" stroke-width="1.3"/><path d="M1 3.6 H5 M1 6.6 H6" stroke="#9a9a9a" stroke-width="0.6"/></svg>
<span class="t " style="left:843.20px;top:586.12px;font-size:6.3px;line-height:7.56px;color:#e8e8e8;transform:scaleX(0.8480);">MODEL</span>
<div class="b" style="left:864.00px;top:584.60px;width:0.53px;height:10.83px;background:#4a4a4e;"></div>
<span class="t " style="left:865.60px;top:586.12px;font-size:6.3px;line-height:7.56px;color:#6a6a6e;transform:scaleX(0.7883);">TABLET</span>
<svg class="b" style="left:887.6px;top:585px" width="10" height="10" viewBox="0 0 10 10"><circle cx="5" cy="5" r="3" fill="none" stroke="#1a66d8" stroke-width="2.6" stroke-dasharray="1.5 0.86"/><circle cx="5" cy="5" r="2.6" fill="none" stroke="#1a66d8" stroke-width="1.6"/></svg>
<svg class="b" style="left:902.6px;top:585px" width="10" height="10" viewBox="0 0 10 10"><circle cx="5" cy="2.4" r="1.5" fill="none" stroke="#e6e6e6" stroke-width="0.9"/><path d="M2.4 9.4 V6.4 Q2.4 5 5 5 Q7.6 5 7.6 6.4 V9.4 M4 9.4 V7.4 H6 V9.4" fill="none" stroke="#e6e6e6" stroke-width="0.9"/></svg>
<svg class="b" style="left:918.4px;top:585px" width="10" height="10" viewBox="0 0 10 10"><rect x="0.8" y="1.6" width="8.4" height="6.8" fill="#e8e8ec"/><rect x="1.6" y="3.4" width="4.6" height="4" fill="#2858b8"/></svg>
<svg class="b" style="left:933.7px;top:585px" width="10" height="10" viewBox="0 0 10 10"><rect x="0.6" y="1" width="6" height="4.6" fill="#2858b8" stroke="#e8e8ec" stroke-width="0.7"/><rect x="3.4" y="4" width="6" height="5" fill="#f0f0f4"/></svg>
<div class="b" style="left:948.10px;top:584.00px;width:11.23px;height:12.03px;background:#c9c9c9;border-radius:1px;"></div><svg class="b" style="left:948.7px;top:585px" width="10" height="10" viewBox="0 0 10 10"><circle cx="5" cy="5" r="3.2" fill="#f4f4f8" stroke="#8a8a90" stroke-width="0.8"/><path d="M5 5 L7 3" stroke="#4a90d8" stroke-width="0.9"/></svg>
<svg class="b" style="left:964.4px;top:585px" width="10" height="10" viewBox="0 0 10 10"><circle cx="5" cy="5" r="3.8" fill="#3aa83a"/><path d="M3.2 5 L4.6 6.4 L7 3.6" fill="none" stroke="#fff" stroke-width="1"/></svg>
</div></div>
</body></html>
